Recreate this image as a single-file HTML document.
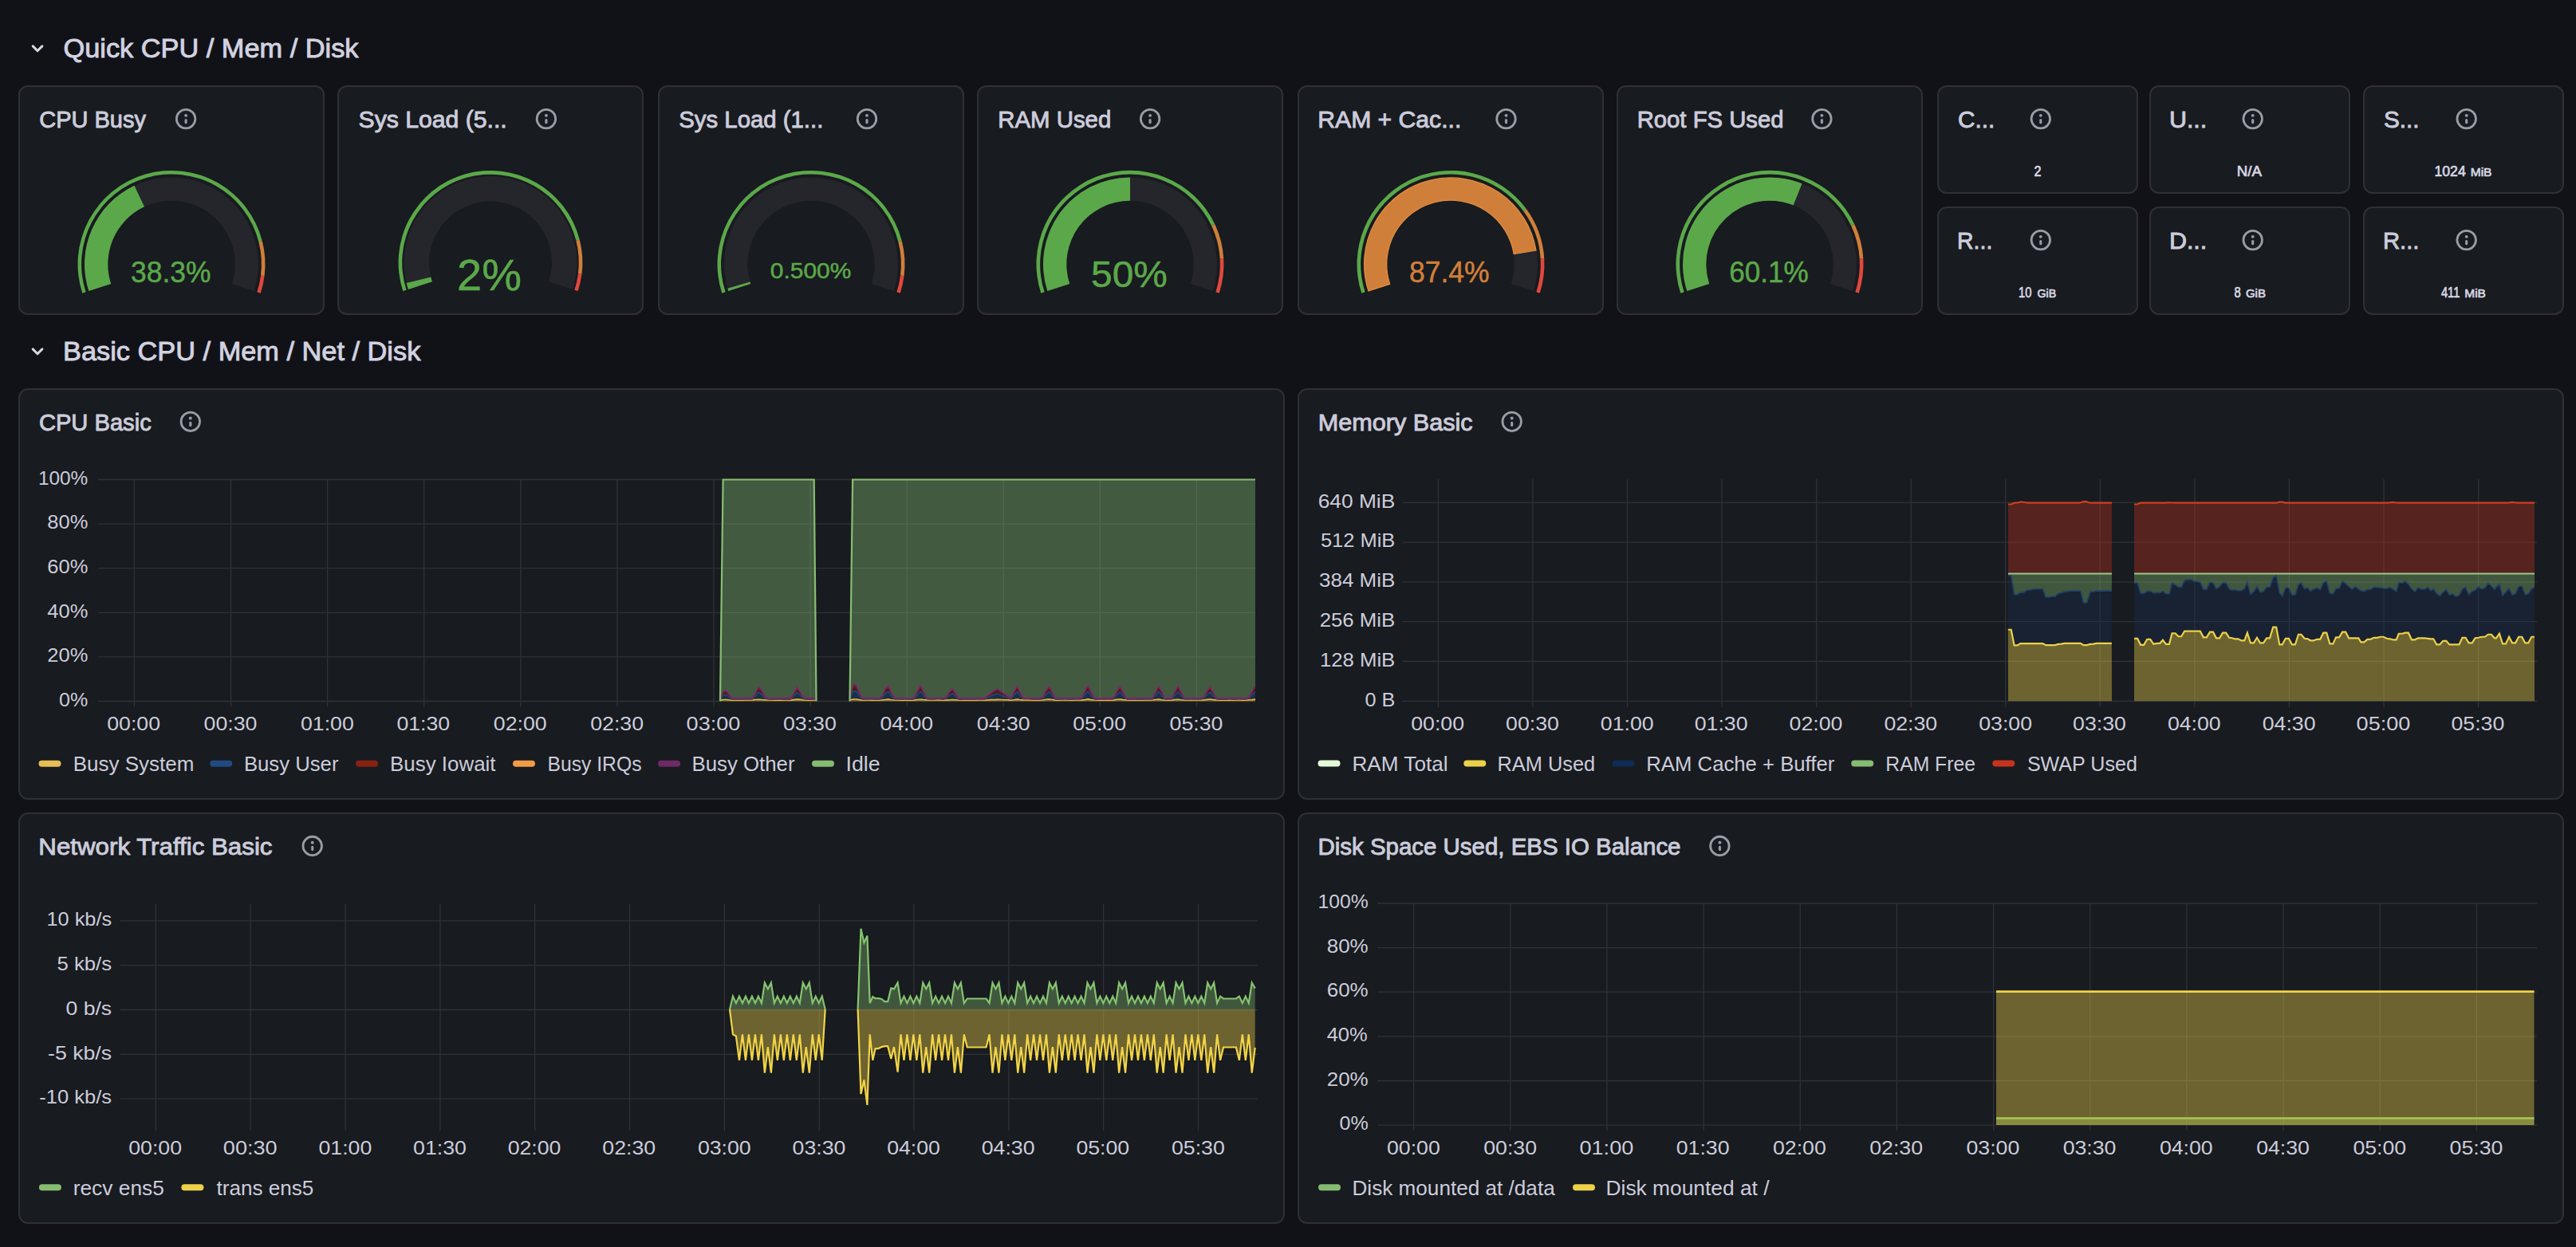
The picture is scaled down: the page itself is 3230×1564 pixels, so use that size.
<!DOCTYPE html>
<html><head><meta charset="utf-8"><style>
html,body{margin:0;padding:0;background:#111217;width:3230px;height:1564px;overflow:hidden}
svg{display:block}
</style></head><body>
<svg width="3230" height="1564" viewBox="0 0 3230 1564" font-family='"Liberation Sans", sans-serif'>
<rect x="0" y="0" width="3230" height="1564" fill="#111217"/>
<polyline points="41.2,57.9 47,63.8 52.9,57.9" fill="none" stroke="#d6d6e4" stroke-width="3" stroke-linecap="round" stroke-linejoin="round"/>
<text x="79.50" y="72.00" font-size="33" fill="#d2d2e0" font-weight="normal" stroke="#d2d2e0" stroke-width="0.9" textLength="370.00" lengthAdjust="spacingAndGlyphs">Quick CPU / Mem / Disk</text>
<rect x="24" y="108" width="382" height="286" rx="11" ry="11" fill="#181b1f" stroke="#2e3036" stroke-width="2"/>
<path d="M103.25,367.71 A117.5,117.5 0 1 1 328.81,302.18 L324.35,303.32 A112.9,112.9 0 1 0 107.63,366.29 Z" fill="#5ba84a"/>
<path d="M328.81,302.18 A117.5,117.5 0 0 1 331.57,346.13 L327.01,345.55 A112.9,112.9 0 0 0 324.35,303.32 Z" fill="#d07f3a"/>
<path d="M331.57,346.13 A117.5,117.5 0 0 1 326.75,367.71 L322.37,366.29 A112.9,112.9 0 0 0 327.01,345.55 Z" fill="#e0483d"/>
<path d="M111.33,365.08 A109.0,109.0 0 1 1 318.67,365.08 L290.80,356.03 A79.7,79.7 0 1 0 139.20,356.03 Z" fill="#25262b"/>
<path d="M111.33,365.08 A109.0,109.0 0 0 1 168.47,232.83 L180.97,259.33 A79.7,79.7 0 0 0 139.20,356.03 Z" fill="#5ba84a"/>
<text x="49.30" y="160.30" font-size="29" fill="#ccccdc" font-weight="normal" stroke="#ccccdc" stroke-width="0.9" textLength="133.60" lengthAdjust="spacingAndGlyphs">CPU Busy</text>
<circle cx="233.1" cy="149.1" r="11.75" fill="none" stroke="#9b9ca6" stroke-width="2.8"/>
<circle cx="233.1" cy="144.85" r="1.95" fill="#9b9ca6"/>
<line x1="233.1" y1="150.50" x2="233.1" y2="153.70" stroke="#9b9ca6" stroke-width="3.1" stroke-linecap="round"/>
<text x="164.10" y="353.50" font-size="36.2" fill="#5ba84a" font-weight="normal" stroke="#5ba84a" stroke-width="0.5" textLength="100.30" lengthAdjust="spacingAndGlyphs">38.3%</text>
<rect x="424" y="108" width="382" height="286" rx="11" ry="11" fill="#181b1f" stroke="#2e3036" stroke-width="2"/>
<path d="M505.25,365.06 A115.4,115.4 0 1 1 726.77,300.70 L722.32,301.85 A110.8,110.8 0 1 0 509.62,363.64 Z" fill="#5ba84a"/>
<path d="M726.77,300.70 A115.4,115.4 0 0 1 729.49,343.86 L724.93,343.29 A110.8,110.8 0 0 0 722.32,301.85 Z" fill="#d07f3a"/>
<path d="M729.49,343.86 A115.4,115.4 0 0 1 724.75,365.06 L720.38,363.64 A110.8,110.8 0 0 0 724.93,343.29 Z" fill="#e0483d"/>
<path d="M511.91,362.90 A108.4,108.4 0 1 1 718.09,362.90 L688.14,353.16 A76.9,76.9 0 1 0 541.86,353.16 Z" fill="#25262b"/>
<path d="M511.91,362.90 A108.4,108.4 0 0 1 509.68,355.04 L540.28,347.59 A76.9,76.9 0 0 0 541.86,353.16 Z" fill="#5ba84a"/>
<text x="449.50" y="160.30" font-size="29" fill="#ccccdc" font-weight="normal" stroke="#ccccdc" stroke-width="0.9" textLength="186.20" lengthAdjust="spacingAndGlyphs">Sys Load (5...</text>
<circle cx="684.9" cy="149.1" r="11.75" fill="none" stroke="#9b9ca6" stroke-width="2.8"/>
<circle cx="684.9" cy="144.85" r="1.95" fill="#9b9ca6"/>
<line x1="684.9" y1="150.50" x2="684.9" y2="153.70" stroke="#9b9ca6" stroke-width="3.1" stroke-linecap="round"/>
<text x="573.10" y="364.00" font-size="55.5" fill="#5ba84a" font-weight="normal" stroke="#5ba84a" stroke-width="0.5" textLength="80.90" lengthAdjust="spacingAndGlyphs">2%</text>
<rect x="826" y="108" width="382" height="286" rx="11" ry="11" fill="#181b1f" stroke="#2e3036" stroke-width="2"/>
<path d="M905.25,367.71 A117.5,117.5 0 1 1 1130.81,302.18 L1126.35,303.32 A112.9,112.9 0 1 0 909.63,366.29 Z" fill="#5ba84a"/>
<path d="M1130.81,302.18 A117.5,117.5 0 0 1 1133.57,346.13 L1129.01,345.55 A112.9,112.9 0 0 0 1126.35,303.32 Z" fill="#d07f3a"/>
<path d="M1133.57,346.13 A117.5,117.5 0 0 1 1128.75,367.71 L1124.37,366.29 A112.9,112.9 0 0 0 1129.01,345.55 Z" fill="#e0483d"/>
<path d="M913.33,365.08 A109.0,109.0 0 1 1 1120.67,365.08 L1092.80,356.03 A79.7,79.7 0 1 0 941.20,356.03 Z" fill="#25262b"/>
<path d="M913.33,365.08 A109.0,109.0 0 0 1 912.31,361.74 L940.45,353.59 A79.7,79.7 0 0 0 941.20,356.03 Z" fill="#5ba84a"/>
<text x="851.30" y="160.30" font-size="29" fill="#ccccdc" font-weight="normal" stroke="#ccccdc" stroke-width="0.9" textLength="181.00" lengthAdjust="spacingAndGlyphs">Sys Load (1...</text>
<circle cx="1087.0" cy="149.1" r="11.75" fill="none" stroke="#9b9ca6" stroke-width="2.8"/>
<circle cx="1087.0" cy="144.85" r="1.95" fill="#9b9ca6"/>
<line x1="1087.0" y1="150.50" x2="1087.0" y2="153.70" stroke="#9b9ca6" stroke-width="3.1" stroke-linecap="round"/>
<text x="965.80" y="348.70" font-size="27.8" fill="#5ba84a" font-weight="normal" stroke="#5ba84a" stroke-width="0.5" textLength="101.50" lengthAdjust="spacingAndGlyphs">0.500%</text>
<rect x="1226" y="108" width="382" height="286" rx="11" ry="11" fill="#181b1f" stroke="#2e3036" stroke-width="2"/>
<path d="M1305.25,367.71 A117.5,117.5 0 0 1 1523.32,281.37 L1519.15,283.33 A112.9,112.9 0 0 0 1309.63,366.29 Z" fill="#5ba84a"/>
<path d="M1523.32,281.37 A117.5,117.5 0 0 1 1534.27,324.02 L1529.68,324.31 A112.9,112.9 0 0 0 1519.15,283.33 Z" fill="#d07f3a"/>
<path d="M1534.27,324.02 A117.5,117.5 0 0 1 1528.75,367.71 L1524.37,366.29 A112.9,112.9 0 0 0 1529.68,324.31 Z" fill="#e0483d"/>
<path d="M1313.33,365.08 A109.0,109.0 0 1 1 1520.67,365.08 L1492.80,356.03 A79.7,79.7 0 1 0 1341.20,356.03 Z" fill="#25262b"/>
<path d="M1313.33,365.08 A109.0,109.0 0 0 1 1417.00,222.40 L1417.00,251.70 A79.7,79.7 0 0 0 1341.20,356.03 Z" fill="#5ba84a"/>
<text x="1251.30" y="160.30" font-size="29" fill="#ccccdc" font-weight="normal" stroke="#ccccdc" stroke-width="0.9" textLength="142.00" lengthAdjust="spacingAndGlyphs">RAM Used</text>
<circle cx="1442.1" cy="149.1" r="11.75" fill="none" stroke="#9b9ca6" stroke-width="2.8"/>
<circle cx="1442.1" cy="144.85" r="1.95" fill="#9b9ca6"/>
<line x1="1442.1" y1="150.50" x2="1442.1" y2="153.70" stroke="#9b9ca6" stroke-width="3.1" stroke-linecap="round"/>
<text x="1368.10" y="359.80" font-size="46.2" fill="#5ba84a" font-weight="normal" stroke="#5ba84a" stroke-width="0.5" textLength="95.80" lengthAdjust="spacingAndGlyphs">50%</text>
<rect x="1628" y="108" width="382" height="286" rx="11" ry="11" fill="#181b1f" stroke="#2e3036" stroke-width="2"/>
<path d="M1707.25,367.71 A117.5,117.5 0 0 1 1914.06,262.34 L1910.34,265.04 A112.9,112.9 0 0 0 1711.63,366.29 Z" fill="#5ba84a"/>
<path d="M1914.06,262.34 A117.5,117.5 0 0 1 1936.27,324.02 L1931.68,324.31 A112.9,112.9 0 0 0 1910.34,265.04 Z" fill="#d07f3a"/>
<path d="M1936.27,324.02 A117.5,117.5 0 0 1 1930.75,367.71 L1926.37,366.29 A112.9,112.9 0 0 0 1931.68,324.31 Z" fill="#e0483d"/>
<path d="M1715.33,365.08 A109.0,109.0 0 1 1 1922.67,365.08 L1894.80,356.03 A79.7,79.7 0 1 0 1743.20,356.03 Z" fill="#25262b"/>
<path d="M1715.91,364.90 A108.4,108.4 0 1 1 1926.00,314.04 L1898.26,318.54 A80.3,80.3 0 1 0 1742.63,356.21 Z" fill="#d07f3a" stroke="#e08b41" stroke-width="1.3"/>
<text x="1652.30" y="160.30" font-size="29" fill="#ccccdc" font-weight="normal" stroke="#ccccdc" stroke-width="0.9" textLength="180.00" lengthAdjust="spacingAndGlyphs">RAM + Cac...</text>
<circle cx="1888.5" cy="149.1" r="11.75" fill="none" stroke="#9b9ca6" stroke-width="2.8"/>
<circle cx="1888.5" cy="144.85" r="1.95" fill="#9b9ca6"/>
<line x1="1888.5" y1="150.50" x2="1888.5" y2="153.70" stroke="#9b9ca6" stroke-width="3.1" stroke-linecap="round"/>
<text x="1767.10" y="353.50" font-size="36.2" fill="#d07f3a" font-weight="normal" stroke="#d07f3a" stroke-width="0.5" textLength="100.50" lengthAdjust="spacingAndGlyphs">87.4%</text>
<rect x="2028" y="108" width="382" height="286" rx="11" ry="11" fill="#181b1f" stroke="#2e3036" stroke-width="2"/>
<path d="M2107.25,367.71 A117.5,117.5 0 0 1 2325.32,281.37 L2321.15,283.33 A112.9,112.9 0 0 0 2111.63,366.29 Z" fill="#5ba84a"/>
<path d="M2325.32,281.37 A117.5,117.5 0 0 1 2336.27,324.02 L2331.68,324.31 A112.9,112.9 0 0 0 2321.15,283.33 Z" fill="#d07f3a"/>
<path d="M2336.27,324.02 A117.5,117.5 0 0 1 2330.75,367.71 L2326.37,366.29 A112.9,112.9 0 0 0 2331.68,324.31 Z" fill="#e0483d"/>
<path d="M2115.33,365.08 A109.0,109.0 0 1 1 2322.67,365.08 L2294.80,356.03 A79.7,79.7 0 1 0 2143.20,356.03 Z" fill="#25262b"/>
<path d="M2115.33,365.08 A109.0,109.0 0 0 1 2259.51,230.21 L2248.62,257.41 A79.7,79.7 0 0 0 2143.20,356.03 Z" fill="#5ba84a"/>
<text x="2052.70" y="160.30" font-size="29" fill="#ccccdc" font-weight="normal" stroke="#ccccdc" stroke-width="0.9" textLength="183.80" lengthAdjust="spacingAndGlyphs">Root FS Used</text>
<circle cx="2284.4" cy="149.1" r="11.75" fill="none" stroke="#9b9ca6" stroke-width="2.8"/>
<circle cx="2284.4" cy="144.85" r="1.95" fill="#9b9ca6"/>
<line x1="2284.4" y1="150.50" x2="2284.4" y2="153.70" stroke="#9b9ca6" stroke-width="3.1" stroke-linecap="round"/>
<text x="2168.30" y="353.90" font-size="36.4" fill="#5ba84a" font-weight="normal" stroke="#5ba84a" stroke-width="0.5" textLength="99.40" lengthAdjust="spacingAndGlyphs">60.1%</text>
<rect x="2430" y="108" width="250" height="134" rx="11" ry="11" fill="#181b1f" stroke="#2e3036" stroke-width="2"/>
<text x="2455.10" y="160.30" font-size="29" fill="#ccccdc" font-weight="normal" stroke="#ccccdc" stroke-width="0.9" textLength="46.20" lengthAdjust="spacingAndGlyphs">C...</text>
<circle cx="2558.8" cy="149.1" r="11.75" fill="none" stroke="#9b9ca6" stroke-width="2.8"/>
<circle cx="2558.8" cy="144.85" r="1.95" fill="#9b9ca6"/>
<line x1="2558.8" y1="150.50" x2="2558.8" y2="153.70" stroke="#9b9ca6" stroke-width="3.1" stroke-linecap="round"/>
<text x="2550.50" y="220.90" font-size="18" fill="#d6d7e3" font-weight="normal" stroke="#d6d7e3" stroke-width="0.7" textLength="9.00" lengthAdjust="spacingAndGlyphs">2</text>
<rect x="2696" y="108" width="250" height="134" rx="11" ry="11" fill="#181b1f" stroke="#2e3036" stroke-width="2"/>
<text x="2719.90" y="160.30" font-size="29" fill="#ccccdc" font-weight="normal" stroke="#ccccdc" stroke-width="0.9" textLength="47.40" lengthAdjust="spacingAndGlyphs">U...</text>
<circle cx="2824.7" cy="149.1" r="11.75" fill="none" stroke="#9b9ca6" stroke-width="2.8"/>
<circle cx="2824.7" cy="144.85" r="1.95" fill="#9b9ca6"/>
<line x1="2824.7" y1="150.50" x2="2824.7" y2="153.70" stroke="#9b9ca6" stroke-width="3.1" stroke-linecap="round"/>
<text x="2804.70" y="220.90" font-size="18" fill="#d6d7e3" font-weight="normal" stroke="#d6d7e3" stroke-width="0.7" textLength="31.20" lengthAdjust="spacingAndGlyphs">N/A</text>
<rect x="2964" y="108" width="250" height="134" rx="11" ry="11" fill="#181b1f" stroke="#2e3036" stroke-width="2"/>
<text x="2988.90" y="160.30" font-size="29" fill="#ccccdc" font-weight="normal" stroke="#ccccdc" stroke-width="0.9" textLength="44.60" lengthAdjust="spacingAndGlyphs">S...</text>
<circle cx="3092.7" cy="149.1" r="11.75" fill="none" stroke="#9b9ca6" stroke-width="2.8"/>
<circle cx="3092.7" cy="144.85" r="1.95" fill="#9b9ca6"/>
<line x1="3092.7" y1="150.50" x2="3092.7" y2="153.70" stroke="#9b9ca6" stroke-width="3.1" stroke-linecap="round"/>
<text x="3052.50" y="220.90" font-size="18" fill="#d6d7e3" font-weight="normal" stroke="#d6d7e3" stroke-width="0.7" textLength="39.20" lengthAdjust="spacingAndGlyphs">1024</text>
<text x="3097.70" y="220.90" font-size="15" fill="#d6d7e3" font-weight="normal" stroke="#d6d7e3" stroke-width="0.7" textLength="26.80" lengthAdjust="spacingAndGlyphs">MiB</text>
<rect x="2430" y="260" width="250" height="134" rx="11" ry="11" fill="#181b1f" stroke="#2e3036" stroke-width="2"/>
<text x="2454.10" y="312.30" font-size="29" fill="#ccccdc" font-weight="normal" stroke="#ccccdc" stroke-width="0.9" textLength="44.20" lengthAdjust="spacingAndGlyphs">R...</text>
<circle cx="2558.8" cy="301.1" r="11.75" fill="none" stroke="#9b9ca6" stroke-width="2.8"/>
<circle cx="2558.8" cy="296.85" r="1.95" fill="#9b9ca6"/>
<line x1="2558.8" y1="302.50" x2="2558.8" y2="305.70" stroke="#9b9ca6" stroke-width="3.1" stroke-linecap="round"/>
<text x="2531.10" y="373.00" font-size="18" fill="#d6d7e3" font-weight="normal" stroke="#d6d7e3" stroke-width="0.7" textLength="16.40" lengthAdjust="spacingAndGlyphs">10</text>
<text x="2554.50" y="373.00" font-size="15" fill="#d6d7e3" font-weight="normal" stroke="#d6d7e3" stroke-width="0.7" textLength="23.80" lengthAdjust="spacingAndGlyphs">GiB</text>
<rect x="2696" y="260" width="250" height="134" rx="11" ry="11" fill="#181b1f" stroke="#2e3036" stroke-width="2"/>
<text x="2719.90" y="312.30" font-size="29" fill="#ccccdc" font-weight="normal" stroke="#ccccdc" stroke-width="0.9" textLength="47.40" lengthAdjust="spacingAndGlyphs">D...</text>
<circle cx="2824.7" cy="301.1" r="11.75" fill="none" stroke="#9b9ca6" stroke-width="2.8"/>
<circle cx="2824.7" cy="296.85" r="1.95" fill="#9b9ca6"/>
<line x1="2824.7" y1="302.50" x2="2824.7" y2="305.70" stroke="#9b9ca6" stroke-width="3.1" stroke-linecap="round"/>
<text x="2801.50" y="373.00" font-size="18" fill="#d6d7e3" font-weight="normal" stroke="#d6d7e3" stroke-width="0.7" textLength="8.20" lengthAdjust="spacingAndGlyphs">8</text>
<text x="2815.90" y="373.00" font-size="15" fill="#d6d7e3" font-weight="normal" stroke="#d6d7e3" stroke-width="0.7" textLength="25.00" lengthAdjust="spacingAndGlyphs">GiB</text>
<rect x="2964" y="260" width="250" height="134" rx="11" ry="11" fill="#181b1f" stroke="#2e3036" stroke-width="2"/>
<text x="2987.90" y="312.30" font-size="29" fill="#ccccdc" font-weight="normal" stroke="#ccccdc" stroke-width="0.9" textLength="45.60" lengthAdjust="spacingAndGlyphs">R...</text>
<circle cx="3092.7" cy="301.1" r="11.75" fill="none" stroke="#9b9ca6" stroke-width="2.8"/>
<circle cx="3092.7" cy="296.85" r="1.95" fill="#9b9ca6"/>
<line x1="3092.7" y1="302.50" x2="3092.7" y2="305.70" stroke="#9b9ca6" stroke-width="3.1" stroke-linecap="round"/>
<text x="3060.90" y="373.00" font-size="18" fill="#d6d7e3" font-weight="normal" stroke="#d6d7e3" stroke-width="0.7" textLength="23.40" lengthAdjust="spacingAndGlyphs">411</text>
<text x="3090.30" y="373.00" font-size="15" fill="#d6d7e3" font-weight="normal" stroke="#d6d7e3" stroke-width="0.7" textLength="26.60" lengthAdjust="spacingAndGlyphs">MiB</text>
<polyline points="41.2,437.9 47,443.8 52.9,437.9" fill="none" stroke="#d6d6e4" stroke-width="3" stroke-linecap="round" stroke-linejoin="round"/>
<text x="79.10" y="452.40" font-size="33" fill="#d2d2e0" font-weight="normal" stroke="#d2d2e0" stroke-width="0.9" textLength="448.20" lengthAdjust="spacingAndGlyphs">Basic CPU / Mem / Net / Disk</text>
<rect x="24" y="488" width="1586" height="514" rx="11" ry="11" fill="#181b1f" stroke="#2e3036" stroke-width="2"/>
<text x="48.90" y="540.00" font-size="29" fill="#ccccdc" font-weight="normal" stroke="#ccccdc" stroke-width="0.9" textLength="140.80" lengthAdjust="spacingAndGlyphs">CPU Basic</text>
<circle cx="238.8" cy="528.8" r="11.75" fill="none" stroke="#9b9ca6" stroke-width="2.8"/>
<circle cx="238.8" cy="524.55" r="1.95" fill="#9b9ca6"/>
<line x1="238.8" y1="530.20" x2="238.8" y2="533.40" stroke="#9b9ca6" stroke-width="3.1" stroke-linecap="round"/>
<line x1="123" y1="601.5" x2="1574" y2="601.5" stroke="#303237" stroke-width="1.3"/>
<line x1="123" y1="657.1" x2="1574" y2="657.1" stroke="#303237" stroke-width="1.3"/>
<line x1="123" y1="712.7" x2="1574" y2="712.7" stroke="#303237" stroke-width="1.3"/>
<line x1="123" y1="768.3" x2="1574" y2="768.3" stroke="#303237" stroke-width="1.3"/>
<line x1="123" y1="823.9" x2="1574" y2="823.9" stroke="#303237" stroke-width="1.3"/>
<line x1="123" y1="879.5" x2="1574" y2="879.5" stroke="#303237" stroke-width="1.3"/>
<line x1="168.4" y1="601.5" x2="168.4" y2="886.7" stroke="#303237" stroke-width="1.3"/>
<line x1="289.5" y1="601.5" x2="289.5" y2="886.7" stroke="#303237" stroke-width="1.3"/>
<line x1="410.6" y1="601.5" x2="410.6" y2="886.7" stroke="#303237" stroke-width="1.3"/>
<line x1="531.7" y1="601.5" x2="531.7" y2="886.7" stroke="#303237" stroke-width="1.3"/>
<line x1="652.8" y1="601.5" x2="652.8" y2="886.7" stroke="#303237" stroke-width="1.3"/>
<line x1="773.9" y1="601.5" x2="773.9" y2="886.7" stroke="#303237" stroke-width="1.3"/>
<line x1="895.0" y1="601.5" x2="895.0" y2="886.7" stroke="#303237" stroke-width="1.3"/>
<line x1="1016.1" y1="601.5" x2="1016.1" y2="886.7" stroke="#303237" stroke-width="1.3"/>
<line x1="1137.2" y1="601.5" x2="1137.2" y2="886.7" stroke="#303237" stroke-width="1.3"/>
<line x1="1258.3" y1="601.5" x2="1258.3" y2="886.7" stroke="#303237" stroke-width="1.3"/>
<line x1="1379.4" y1="601.5" x2="1379.4" y2="886.7" stroke="#303237" stroke-width="1.3"/>
<line x1="1500.5" y1="601.5" x2="1500.5" y2="886.7" stroke="#303237" stroke-width="1.3"/>
<text x="47.90" y="607.70" font-size="24" fill="#ccccdc" font-weight="normal" textLength="62.40" lengthAdjust="spacingAndGlyphs">100%</text>
<text x="59.30" y="663.30" font-size="24" fill="#ccccdc" font-weight="normal" textLength="51.00" lengthAdjust="spacingAndGlyphs">80%</text>
<text x="59.30" y="718.90" font-size="24" fill="#ccccdc" font-weight="normal" textLength="51.00" lengthAdjust="spacingAndGlyphs">60%</text>
<text x="59.30" y="774.50" font-size="24" fill="#ccccdc" font-weight="normal" textLength="51.00" lengthAdjust="spacingAndGlyphs">40%</text>
<text x="59.30" y="830.10" font-size="24" fill="#ccccdc" font-weight="normal" textLength="51.00" lengthAdjust="spacingAndGlyphs">20%</text>
<text x="74.10" y="885.70" font-size="24" fill="#ccccdc" font-weight="normal" textLength="36.20" lengthAdjust="spacingAndGlyphs">0%</text>
<text x="134.20" y="915.60" font-size="24" fill="#ccccdc" font-weight="normal" textLength="66.80" lengthAdjust="spacingAndGlyphs">00:00</text>
<text x="255.60" y="915.60" font-size="24" fill="#ccccdc" font-weight="normal" textLength="66.80" lengthAdjust="spacingAndGlyphs">00:30</text>
<text x="377.00" y="915.60" font-size="24" fill="#ccccdc" font-weight="normal" textLength="66.80" lengthAdjust="spacingAndGlyphs">01:00</text>
<text x="497.40" y="915.60" font-size="24" fill="#ccccdc" font-weight="normal" textLength="66.80" lengthAdjust="spacingAndGlyphs">01:30</text>
<text x="618.80" y="915.60" font-size="24" fill="#ccccdc" font-weight="normal" textLength="66.80" lengthAdjust="spacingAndGlyphs">02:00</text>
<text x="740.20" y="915.60" font-size="24" fill="#ccccdc" font-weight="normal" textLength="66.80" lengthAdjust="spacingAndGlyphs">02:30</text>
<text x="860.60" y="915.60" font-size="24" fill="#ccccdc" font-weight="normal" textLength="67.80" lengthAdjust="spacingAndGlyphs">03:00</text>
<text x="982.00" y="915.60" font-size="24" fill="#ccccdc" font-weight="normal" textLength="66.80" lengthAdjust="spacingAndGlyphs">03:30</text>
<text x="1103.40" y="915.60" font-size="24" fill="#ccccdc" font-weight="normal" textLength="66.80" lengthAdjust="spacingAndGlyphs">04:00</text>
<text x="1224.80" y="915.60" font-size="24" fill="#ccccdc" font-weight="normal" textLength="66.80" lengthAdjust="spacingAndGlyphs">04:30</text>
<text x="1345.20" y="915.60" font-size="24" fill="#ccccdc" font-weight="normal" textLength="66.80" lengthAdjust="spacingAndGlyphs">05:00</text>
<text x="1466.60" y="915.60" font-size="24" fill="#ccccdc" font-weight="normal" textLength="66.80" lengthAdjust="spacingAndGlyphs">05:30</text>
<polygon points="903.00,875.71 906.60,601.50 911.03,601.50 915.05,601.50 919.07,601.50 923.08,601.50 927.10,601.50 931.12,601.50 935.13,601.50 939.15,601.50 943.17,601.50 947.18,601.50 951.20,601.50 955.22,601.50 959.23,601.50 963.25,601.50 967.27,601.50 971.28,601.50 975.30,601.50 979.32,601.50 983.33,601.50 987.35,601.50 991.37,601.50 995.38,601.50 999.40,601.50 1003.42,601.50 1007.43,601.50 1011.45,601.50 1015.47,601.50 1020.70,601.50 1023.50,875.43 1023.50,875.43 1019.48,875.41 1015.47,875.68 1011.45,875.69 1007.43,874.53 1003.42,867.30 999.40,861.96 995.38,869.06 991.37,875.62 987.35,875.36 983.33,875.61 979.32,875.59 975.30,875.48 971.28,875.80 967.27,875.64 963.25,875.52 959.23,873.74 955.22,865.46 951.20,861.22 947.18,869.03 943.17,875.47 939.15,875.54 935.13,875.36 931.12,875.77 927.10,875.48 923.08,875.83 919.07,875.75 915.05,872.11 911.03,866.54 907.02,866.57 903.00,875.71" fill="#7EB26D" fill-opacity="0.42"/>
<polygon points="903.00,878.11 907.02,877.44 911.03,877.49 915.05,878.01 919.07,878.23 923.08,878.22 927.10,878.07 931.12,878.20 935.13,877.99 939.15,878.01 943.17,877.84 947.18,877.51 951.20,877.32 955.22,877.52 959.23,878.06 963.25,877.98 967.27,878.02 971.28,878.22 975.30,877.97 979.32,878.12 983.33,878.06 987.35,877.92 991.37,878.15 995.38,877.65 999.40,877.14 1003.42,877.36 1007.43,878.02 1011.45,878.19 1015.47,878.23 1019.48,877.93 1023.50,877.88 1023.50,879.50 1019.48,879.50 1015.47,879.50 1011.45,879.50 1007.43,879.50 1003.42,879.50 999.40,879.50 995.38,879.50 991.37,879.50 987.35,879.50 983.33,879.50 979.32,879.50 975.30,879.50 971.28,879.50 967.27,879.50 963.25,879.50 959.23,879.50 955.22,879.50 951.20,879.50 947.18,879.50 943.17,879.50 939.15,879.50 935.13,879.50 931.12,879.50 927.10,879.50 923.08,879.50 919.07,879.50 915.05,879.50 911.03,879.50 907.02,879.50 903.00,879.50" fill="#EAB839" fill-opacity="0.4"/>
<polygon points="903.00,877.24 907.02,871.54 911.03,871.51 915.05,875.02 919.07,877.28 923.08,877.36 927.10,877.01 931.12,877.30 935.13,876.89 939.15,877.06 943.17,876.99 947.18,873.01 951.20,868.31 955.22,870.83 959.23,876.00 963.25,877.05 967.27,877.17 971.28,877.33 975.30,877.01 979.32,877.12 983.33,877.14 987.35,876.89 991.37,877.15 995.38,873.02 999.40,868.65 1003.42,871.93 1007.43,876.43 1011.45,877.22 1015.47,877.21 1019.48,876.94 1023.50,876.96 1023.50,877.88 1019.48,877.93 1015.47,878.23 1011.45,878.19 1007.43,878.02 1003.42,877.36 999.40,877.14 995.38,877.65 991.37,878.15 987.35,877.92 983.33,878.06 979.32,878.12 975.30,877.97 971.28,878.22 967.27,878.02 963.25,877.98 959.23,878.06 955.22,877.52 951.20,877.32 947.18,877.51 943.17,877.84 939.15,878.01 935.13,877.99 931.12,878.20 927.10,878.07 923.08,878.22 919.07,878.23 915.05,878.01 911.03,877.49 907.02,877.44 903.00,878.11" fill="#1F4E8C" fill-opacity="0.4"/>
<polygon points="903.00,877.10 907.02,868.50 911.03,868.46 915.05,873.72 919.07,877.14 923.08,877.22 927.10,876.87 931.12,877.16 935.13,876.75 939.15,876.93 943.17,876.86 947.18,870.80 951.20,863.47 955.22,867.45 959.23,875.24 963.25,876.91 967.27,877.03 971.28,877.19 975.30,876.87 979.32,876.98 983.33,877.00 987.35,876.75 991.37,877.01 995.38,870.83 999.40,864.16 1003.42,869.17 1007.43,875.98 1011.45,877.08 1015.47,877.07 1019.48,876.80 1023.50,876.82 1023.50,876.96 1019.48,876.94 1015.47,877.21 1011.45,877.22 1007.43,876.43 1003.42,871.93 999.40,868.65 995.38,873.02 991.37,877.15 987.35,876.89 983.33,877.14 979.32,877.12 975.30,877.01 971.28,877.33 967.27,877.17 963.25,877.05 959.23,876.00 955.22,870.83 951.20,868.31 947.18,873.01 943.17,876.99 939.15,877.06 935.13,876.89 931.12,877.30 927.10,877.01 923.08,877.36 919.07,877.28 915.05,875.02 911.03,871.51 907.02,871.54 903.00,877.24" fill="#8a1c10" fill-opacity="0.4"/>
<polygon points="903.00,876.96 907.02,868.36 911.03,868.33 915.05,873.58 919.07,877.00 923.08,877.08 927.10,876.73 931.12,877.02 935.13,876.61 939.15,876.79 943.17,876.72 947.18,870.67 951.20,863.33 955.22,867.31 959.23,875.10 963.25,876.77 967.27,876.89 971.28,877.05 975.30,876.73 979.32,876.84 983.33,876.86 987.35,876.61 991.37,876.88 995.38,870.69 999.40,864.02 1003.42,869.03 1007.43,875.84 1011.45,876.94 1015.47,876.93 1019.48,876.66 1023.50,876.68 1023.50,876.82 1019.48,876.80 1015.47,877.07 1011.45,877.08 1007.43,875.98 1003.42,869.17 999.40,864.16 995.38,870.83 991.37,877.01 987.35,876.75 983.33,877.00 979.32,876.98 975.30,876.87 971.28,877.19 967.27,877.03 963.25,876.91 959.23,875.24 955.22,867.45 951.20,863.47 947.18,870.80 943.17,876.86 939.15,876.93 935.13,876.75 931.12,877.16 927.10,876.87 923.08,877.22 919.07,877.14 915.05,873.72 911.03,868.46 907.02,868.50 903.00,877.10" fill="#EF9A45" fill-opacity="0.4"/>
<polygon points="903.00,875.71 907.02,866.57 911.03,866.54 915.05,872.11 919.07,875.75 923.08,875.83 927.10,875.48 931.12,875.77 935.13,875.36 939.15,875.54 943.17,875.47 947.18,869.03 951.20,861.22 955.22,865.46 959.23,873.74 963.25,875.52 967.27,875.64 971.28,875.80 975.30,875.48 979.32,875.59 983.33,875.61 987.35,875.36 991.37,875.62 995.38,869.06 999.40,861.96 1003.42,867.30 1007.43,874.53 1011.45,875.69 1015.47,875.68 1019.48,875.41 1023.50,875.43 1023.50,876.68 1019.48,876.66 1015.47,876.93 1011.45,876.94 1007.43,875.84 1003.42,869.03 999.40,864.02 995.38,870.69 991.37,876.88 987.35,876.61 983.33,876.86 979.32,876.84 975.30,876.73 971.28,877.05 967.27,876.89 963.25,876.77 959.23,875.10 955.22,867.31 951.20,863.33 947.18,870.67 943.17,876.72 939.15,876.79 935.13,876.61 931.12,877.02 927.10,876.73 923.08,877.08 919.07,877.00 915.05,873.58 911.03,868.33 907.02,868.36 903.00,876.96" fill="#7a2a70" fill-opacity="0.4"/>
<polyline points="903.00,878.11 907.02,877.44 911.03,877.49 915.05,878.01 919.07,878.23 923.08,878.22 927.10,878.07 931.12,878.20 935.13,877.99 939.15,878.01 943.17,877.84 947.18,877.51 951.20,877.32 955.22,877.52 959.23,878.06 963.25,877.98 967.27,878.02 971.28,878.22 975.30,877.97 979.32,878.12 983.33,878.06 987.35,877.92 991.37,878.15 995.38,877.65 999.40,877.14 1003.42,877.36 1007.43,878.02 1011.45,878.19 1015.47,878.23 1019.48,877.93 1023.50,877.88" fill="none" stroke="#EAB839" stroke-width="1.6" stroke-opacity="1.0" stroke-linejoin="miter" stroke-miterlimit="4"/>
<polyline points="903.00,877.24 907.02,871.54 911.03,871.51 915.05,875.02 919.07,877.28 923.08,877.36 927.10,877.01 931.12,877.30 935.13,876.89 939.15,877.06 943.17,876.99 947.18,873.01 951.20,868.31 955.22,870.83 959.23,876.00 963.25,877.05 967.27,877.17 971.28,877.33 975.30,877.01 979.32,877.12 983.33,877.14 987.35,876.89 991.37,877.15 995.38,873.02 999.40,868.65 1003.42,871.93 1007.43,876.43 1011.45,877.22 1015.47,877.21 1019.48,876.94 1023.50,876.96" fill="none" stroke="#1F4E8C" stroke-width="1.5" stroke-opacity="0.9" stroke-linejoin="miter" stroke-miterlimit="4"/>
<polyline points="903.00,877.10 907.02,868.50 911.03,868.46 915.05,873.72 919.07,877.14 923.08,877.22 927.10,876.87 931.12,877.16 935.13,876.75 939.15,876.93 943.17,876.86 947.18,870.80 951.20,863.47 955.22,867.45 959.23,875.24 963.25,876.91 967.27,877.03 971.28,877.19 975.30,876.87 979.32,876.98 983.33,877.00 987.35,876.75 991.37,877.01 995.38,870.83 999.40,864.16 1003.42,869.17 1007.43,875.98 1011.45,877.08 1015.47,877.07 1019.48,876.80 1023.50,876.82" fill="none" stroke="#8a1c10" stroke-width="1.3" stroke-opacity="0.6" stroke-linejoin="miter" stroke-miterlimit="4"/>
<polyline points="903.00,875.71 907.02,866.57 911.03,866.54 915.05,872.11 919.07,875.75 923.08,875.83 927.10,875.48 931.12,875.77 935.13,875.36 939.15,875.54 943.17,875.47 947.18,869.03 951.20,861.22 955.22,865.46 959.23,873.74 963.25,875.52 967.27,875.64 971.28,875.80 975.30,875.48 979.32,875.59 983.33,875.61 987.35,875.36 991.37,875.62 995.38,869.06 999.40,861.96 1003.42,867.30 1007.43,874.53 1011.45,875.69 1015.47,875.68 1019.48,875.41 1023.50,875.43" fill="none" stroke="#7a2a70" stroke-width="1.5" stroke-opacity="1.0" stroke-linejoin="miter" stroke-miterlimit="4"/>
<polyline points="903.00,879.50 906.60,601.50 911.03,601.50 915.05,601.50 919.07,601.50 923.08,601.50 927.10,601.50 931.12,601.50 935.13,601.50 939.15,601.50 943.17,601.50 947.18,601.50 951.20,601.50 955.22,601.50 959.23,601.50 963.25,601.50 967.27,601.50 971.28,601.50 975.30,601.50 979.32,601.50 983.33,601.50 987.35,601.50 991.37,601.50 995.38,601.50 999.40,601.50 1003.42,601.50 1007.43,601.50 1011.45,601.50 1015.47,601.50 1020.70,601.50 1023.50,879.50" fill="none" stroke="#88bd72" stroke-width="2.2" stroke-opacity="1.0" stroke-linejoin="miter" stroke-miterlimit="4"/>
<polygon points="1065.50,875.43 1069.10,601.50 1073.57,601.50 1077.61,601.50 1081.64,601.50 1085.68,601.50 1089.71,601.50 1093.75,601.50 1097.79,601.50 1101.82,601.50 1105.86,601.50 1109.89,601.50 1113.93,601.50 1117.96,601.50 1122.00,601.50 1126.04,601.50 1130.07,601.50 1134.11,601.50 1138.14,601.50 1142.18,601.50 1146.21,601.50 1150.25,601.50 1154.29,601.50 1158.32,601.50 1162.36,601.50 1166.39,601.50 1170.43,601.50 1174.46,601.50 1178.50,601.50 1182.54,601.50 1186.57,601.50 1190.61,601.50 1194.64,601.50 1198.68,601.50 1202.71,601.50 1206.75,601.50 1210.79,601.50 1214.82,601.50 1218.86,601.50 1222.89,601.50 1226.93,601.50 1230.96,601.50 1235.00,601.50 1239.04,601.50 1243.07,601.50 1247.11,601.50 1251.14,601.50 1255.18,601.50 1259.21,601.50 1263.25,601.50 1267.29,601.50 1271.32,601.50 1275.36,601.50 1279.39,601.50 1283.43,601.50 1287.46,601.50 1291.50,601.50 1295.54,601.50 1299.57,601.50 1303.61,601.50 1307.64,601.50 1311.68,601.50 1315.71,601.50 1319.75,601.50 1323.79,601.50 1327.82,601.50 1331.86,601.50 1335.89,601.50 1339.93,601.50 1343.96,601.50 1348.00,601.50 1352.04,601.50 1356.07,601.50 1360.11,601.50 1364.14,601.50 1368.18,601.50 1372.21,601.50 1376.25,601.50 1380.29,601.50 1384.32,601.50 1388.36,601.50 1392.39,601.50 1396.43,601.50 1400.46,601.50 1404.50,601.50 1408.54,601.50 1412.57,601.50 1416.61,601.50 1420.64,601.50 1424.68,601.50 1428.71,601.50 1432.75,601.50 1436.79,601.50 1440.82,601.50 1444.86,601.50 1448.89,601.50 1452.93,601.50 1456.96,601.50 1461.00,601.50 1465.04,601.50 1469.07,601.50 1473.11,601.50 1477.14,601.50 1481.18,601.50 1485.21,601.50 1489.25,601.50 1493.29,601.50 1497.32,601.50 1501.36,601.50 1505.39,601.50 1509.43,601.50 1513.46,601.50 1517.50,601.50 1521.54,601.50 1525.57,601.50 1529.61,601.50 1533.64,601.50 1537.68,601.50 1541.71,601.50 1545.75,601.50 1549.79,601.50 1553.82,601.50 1557.86,601.50 1561.89,601.50 1565.93,601.50 1569.96,601.50 1574.00,601.50 1574.00,859.99 1569.96,866.68 1565.93,874.42 1561.89,875.58 1557.86,875.53 1553.82,875.25 1549.79,875.57 1545.75,875.62 1541.71,875.31 1537.68,875.67 1533.64,875.79 1529.61,875.71 1525.57,875.50 1521.54,868.95 1517.50,861.19 1513.46,866.21 1509.43,874.07 1505.39,875.55 1501.36,875.48 1497.32,875.49 1493.29,875.38 1489.25,875.44 1485.21,875.42 1481.18,868.19 1477.14,860.38 1473.11,867.37 1469.07,875.33 1465.04,875.43 1461.00,875.68 1456.96,867.92 1452.93,860.12 1448.89,867.81 1444.86,875.47 1440.82,875.46 1436.79,875.39 1432.75,875.61 1428.71,875.58 1424.68,875.66 1420.64,875.62 1416.61,875.70 1412.57,875.48 1408.54,868.63 1404.50,860.79 1400.46,866.54 1396.43,874.86 1392.39,875.59 1388.36,875.29 1384.32,875.60 1380.29,875.28 1376.25,875.79 1372.21,875.54 1368.18,867.75 1364.14,859.46 1360.11,866.83 1356.07,875.09 1352.04,875.44 1348.00,875.29 1343.96,875.67 1339.93,875.39 1335.89,875.40 1331.86,875.38 1327.82,875.75 1323.79,875.73 1319.75,868.84 1315.71,860.47 1311.68,865.51 1307.64,873.93 1303.61,875.80 1299.57,875.73 1295.54,875.65 1291.50,875.34 1287.46,875.31 1283.43,875.27 1279.39,868.39 1275.36,860.36 1271.32,867.31 1267.29,875.17 1263.25,872.97 1259.21,869.96 1255.18,867.14 1251.14,864.04 1247.11,865.67 1243.07,868.62 1239.04,871.87 1235.00,875.10 1230.96,875.56 1226.93,875.26 1222.89,875.70 1218.86,875.68 1214.82,875.59 1210.79,875.63 1206.75,875.74 1202.71,875.84 1198.68,870.62 1194.64,863.76 1190.61,867.17 1186.57,873.88 1182.54,875.61 1178.50,875.30 1174.46,875.29 1170.43,875.59 1166.39,875.50 1162.36,875.30 1158.32,867.65 1154.29,859.31 1150.25,866.43 1146.21,875.04 1142.18,875.75 1138.14,875.44 1134.11,875.49 1130.07,875.65 1126.04,875.30 1122.00,875.41 1117.96,869.11 1113.93,859.68 1109.89,864.01 1105.86,873.07 1101.82,875.78 1097.79,875.75 1093.75,875.54 1089.71,875.46 1085.68,875.34 1081.64,875.67 1077.61,868.94 1073.57,858.87 1069.54,859.12 1065.50,875.43" fill="#7EB26D" fill-opacity="0.42"/>
<polygon points="1065.50,877.96 1069.54,877.03 1073.57,876.93 1077.61,877.66 1081.64,878.22 1085.68,877.98 1089.71,877.91 1093.75,878.09 1097.79,878.24 1101.82,878.18 1105.86,878.07 1109.89,877.50 1113.93,877.15 1117.96,877.82 1122.00,878.02 1126.04,877.91 1130.07,878.13 1134.11,878.10 1138.14,877.85 1142.18,878.18 1146.21,878.12 1150.25,877.46 1154.29,877.27 1158.32,877.62 1162.36,877.85 1166.39,878.03 1170.43,877.97 1174.46,877.87 1178.50,877.88 1182.54,878.09 1186.57,878.10 1190.61,877.71 1194.64,877.45 1198.68,877.80 1202.71,878.25 1206.75,878.21 1210.79,878.24 1214.82,877.99 1218.86,878.14 1222.89,878.10 1226.93,877.89 1230.96,878.05 1235.00,878.17 1239.04,877.88 1243.07,877.50 1247.11,877.65 1251.14,877.34 1255.18,877.52 1259.21,877.71 1263.25,877.75 1267.29,878.11 1271.32,877.69 1275.36,877.13 1279.39,877.68 1283.43,877.91 1287.46,877.89 1291.50,877.91 1295.54,878.15 1299.57,878.10 1303.61,878.24 1307.64,878.04 1311.68,877.27 1315.71,876.98 1319.75,877.46 1323.79,878.16 1327.82,878.17 1331.86,877.99 1335.89,877.90 1339.93,877.98 1343.96,878.21 1348.00,877.87 1352.04,877.94 1356.07,878.14 1360.11,877.59 1364.14,876.90 1368.18,877.62 1372.21,877.95 1376.25,878.20 1380.29,877.87 1384.32,878.19 1388.36,877.84 1392.39,878.10 1396.43,878.14 1400.46,877.32 1404.50,877.16 1408.54,877.66 1412.57,877.90 1416.61,878.14 1420.64,878.15 1424.68,878.14 1428.71,878.19 1432.75,878.10 1436.79,878.01 1440.82,878.07 1444.86,878.04 1448.89,877.57 1452.93,877.14 1456.96,877.79 1461.00,878.18 1465.04,877.95 1469.07,878.10 1473.11,877.54 1477.14,877.30 1481.18,877.70 1485.21,877.93 1489.25,878.01 1493.29,877.87 1497.32,877.99 1501.36,878.04 1505.39,878.06 1509.43,877.97 1513.46,877.41 1517.50,877.01 1521.54,877.63 1525.57,877.90 1529.61,878.20 1533.64,878.22 1537.68,878.22 1541.71,877.92 1545.75,878.18 1549.79,877.97 1553.82,877.88 1557.86,878.16 1561.89,878.08 1565.93,877.79 1569.96,877.65 1574.00,877.11 1574.00,879.50 1569.96,879.50 1565.93,879.50 1561.89,879.50 1557.86,879.50 1553.82,879.50 1549.79,879.50 1545.75,879.50 1541.71,879.50 1537.68,879.50 1533.64,879.50 1529.61,879.50 1525.57,879.50 1521.54,879.50 1517.50,879.50 1513.46,879.50 1509.43,879.50 1505.39,879.50 1501.36,879.50 1497.32,879.50 1493.29,879.50 1489.25,879.50 1485.21,879.50 1481.18,879.50 1477.14,879.50 1473.11,879.50 1469.07,879.50 1465.04,879.50 1461.00,879.50 1456.96,879.50 1452.93,879.50 1448.89,879.50 1444.86,879.50 1440.82,879.50 1436.79,879.50 1432.75,879.50 1428.71,879.50 1424.68,879.50 1420.64,879.50 1416.61,879.50 1412.57,879.50 1408.54,879.50 1404.50,879.50 1400.46,879.50 1396.43,879.50 1392.39,879.50 1388.36,879.50 1384.32,879.50 1380.29,879.50 1376.25,879.50 1372.21,879.50 1368.18,879.50 1364.14,879.50 1360.11,879.50 1356.07,879.50 1352.04,879.50 1348.00,879.50 1343.96,879.50 1339.93,879.50 1335.89,879.50 1331.86,879.50 1327.82,879.50 1323.79,879.50 1319.75,879.50 1315.71,879.50 1311.68,879.50 1307.64,879.50 1303.61,879.50 1299.57,879.50 1295.54,879.50 1291.50,879.50 1287.46,879.50 1283.43,879.50 1279.39,879.50 1275.36,879.50 1271.32,879.50 1267.29,879.50 1263.25,879.50 1259.21,879.50 1255.18,879.50 1251.14,879.50 1247.11,879.50 1243.07,879.50 1239.04,879.50 1235.00,879.50 1230.96,879.50 1226.93,879.50 1222.89,879.50 1218.86,879.50 1214.82,879.50 1210.79,879.50 1206.75,879.50 1202.71,879.50 1198.68,879.50 1194.64,879.50 1190.61,879.50 1186.57,879.50 1182.54,879.50 1178.50,879.50 1174.46,879.50 1170.43,879.50 1166.39,879.50 1162.36,879.50 1158.32,879.50 1154.29,879.50 1150.25,879.50 1146.21,879.50 1142.18,879.50 1138.14,879.50 1134.11,879.50 1130.07,879.50 1126.04,879.50 1122.00,879.50 1117.96,879.50 1113.93,879.50 1109.89,879.50 1105.86,879.50 1101.82,879.50 1097.79,879.50 1093.75,879.50 1089.71,879.50 1085.68,879.50 1081.64,879.50 1077.61,879.50 1073.57,879.50 1069.54,879.50 1065.50,879.50" fill="#EAB839" fill-opacity="0.4"/>
<polygon points="1065.50,876.96 1069.54,866.90 1073.57,866.66 1077.61,872.97 1081.64,877.19 1085.68,876.87 1089.71,876.99 1093.75,877.07 1097.79,877.28 1101.82,877.31 1105.86,875.58 1109.89,870.02 1113.93,867.23 1117.96,873.16 1122.00,876.94 1126.04,876.83 1130.07,877.18 1134.11,877.02 1138.14,876.97 1142.18,877.28 1146.21,876.81 1150.25,871.44 1154.29,867.12 1158.32,872.20 1162.36,876.83 1166.39,877.03 1170.43,877.12 1174.46,876.82 1178.50,876.83 1182.54,877.14 1186.57,876.09 1190.61,872.01 1194.64,869.86 1198.68,874.10 1202.71,877.37 1206.75,877.27 1210.79,877.16 1214.82,877.12 1218.86,877.21 1222.89,877.23 1226.93,876.78 1230.96,877.09 1235.00,876.90 1239.04,874.85 1243.07,872.77 1247.11,870.99 1251.14,869.99 1255.18,871.92 1259.21,873.56 1263.25,875.40 1267.29,876.89 1271.32,872.00 1275.36,867.64 1279.39,872.70 1283.43,876.80 1287.46,876.84 1291.50,876.87 1295.54,877.18 1299.57,877.26 1303.61,877.33 1307.64,876.09 1311.68,870.79 1315.71,867.63 1319.75,872.86 1323.79,877.26 1327.82,877.28 1331.86,876.90 1335.89,876.93 1339.93,876.92 1343.96,877.20 1348.00,876.82 1352.04,876.97 1356.07,876.81 1360.11,871.67 1364.14,867.06 1368.18,872.21 1372.21,877.07 1376.25,877.32 1380.29,876.81 1384.32,877.12 1388.36,876.82 1392.39,877.12 1396.43,876.76 1400.46,871.41 1404.50,867.89 1408.54,872.77 1412.57,877.01 1416.61,877.23 1420.64,877.15 1424.68,877.19 1428.71,877.11 1432.75,877.14 1436.79,876.92 1440.82,876.98 1444.86,877.02 1448.89,872.34 1452.93,867.58 1456.96,872.40 1461.00,877.21 1465.04,876.96 1469.07,876.96 1473.11,871.97 1477.14,867.75 1481.18,872.58 1485.21,876.95 1489.25,876.97 1493.29,876.91 1497.32,877.02 1501.36,877.01 1505.39,877.08 1509.43,876.12 1513.46,871.22 1517.50,868.15 1521.54,872.93 1525.57,877.03 1529.61,877.24 1533.64,877.32 1537.68,877.20 1541.71,876.84 1545.75,877.15 1549.79,877.10 1553.82,876.78 1557.86,877.06 1561.89,877.11 1565.93,876.26 1569.96,871.65 1574.00,867.46 1574.00,877.11 1569.96,877.65 1565.93,877.79 1561.89,878.08 1557.86,878.16 1553.82,877.88 1549.79,877.97 1545.75,878.18 1541.71,877.92 1537.68,878.22 1533.64,878.22 1529.61,878.20 1525.57,877.90 1521.54,877.63 1517.50,877.01 1513.46,877.41 1509.43,877.97 1505.39,878.06 1501.36,878.04 1497.32,877.99 1493.29,877.87 1489.25,878.01 1485.21,877.93 1481.18,877.70 1477.14,877.30 1473.11,877.54 1469.07,878.10 1465.04,877.95 1461.00,878.18 1456.96,877.79 1452.93,877.14 1448.89,877.57 1444.86,878.04 1440.82,878.07 1436.79,878.01 1432.75,878.10 1428.71,878.19 1424.68,878.14 1420.64,878.15 1416.61,878.14 1412.57,877.90 1408.54,877.66 1404.50,877.16 1400.46,877.32 1396.43,878.14 1392.39,878.10 1388.36,877.84 1384.32,878.19 1380.29,877.87 1376.25,878.20 1372.21,877.95 1368.18,877.62 1364.14,876.90 1360.11,877.59 1356.07,878.14 1352.04,877.94 1348.00,877.87 1343.96,878.21 1339.93,877.98 1335.89,877.90 1331.86,877.99 1327.82,878.17 1323.79,878.16 1319.75,877.46 1315.71,876.98 1311.68,877.27 1307.64,878.04 1303.61,878.24 1299.57,878.10 1295.54,878.15 1291.50,877.91 1287.46,877.89 1283.43,877.91 1279.39,877.68 1275.36,877.13 1271.32,877.69 1267.29,878.11 1263.25,877.75 1259.21,877.71 1255.18,877.52 1251.14,877.34 1247.11,877.65 1243.07,877.50 1239.04,877.88 1235.00,878.17 1230.96,878.05 1226.93,877.89 1222.89,878.10 1218.86,878.14 1214.82,877.99 1210.79,878.24 1206.75,878.21 1202.71,878.25 1198.68,877.80 1194.64,877.45 1190.61,877.71 1186.57,878.10 1182.54,878.09 1178.50,877.88 1174.46,877.87 1170.43,877.97 1166.39,878.03 1162.36,877.85 1158.32,877.62 1154.29,877.27 1150.25,877.46 1146.21,878.12 1142.18,878.18 1138.14,877.85 1134.11,878.10 1130.07,878.13 1126.04,877.91 1122.00,878.02 1117.96,877.82 1113.93,877.15 1109.89,877.50 1105.86,878.07 1101.82,878.18 1097.79,878.24 1093.75,878.09 1089.71,877.91 1085.68,877.98 1081.64,878.22 1077.61,877.66 1073.57,876.93 1069.54,877.03 1065.50,877.96" fill="#1F4E8C" fill-opacity="0.4"/>
<polygon points="1065.50,876.82 1069.54,861.48 1073.57,861.23 1077.61,870.72 1081.64,877.06 1085.68,876.73 1089.71,876.85 1093.75,876.93 1097.79,877.14 1101.82,877.17 1105.86,874.62 1109.89,866.09 1113.93,862.01 1117.96,870.89 1122.00,876.80 1126.04,876.69 1130.07,877.04 1134.11,876.88 1138.14,876.83 1142.18,877.14 1146.21,876.47 1150.25,868.36 1154.29,861.68 1158.32,869.51 1162.36,876.69 1166.39,876.89 1170.43,876.98 1174.46,876.68 1178.50,876.69 1182.54,877.00 1186.57,875.38 1190.61,869.08 1194.64,865.86 1198.68,872.31 1202.71,877.23 1206.75,877.13 1210.79,877.02 1214.82,876.98 1218.86,877.07 1222.89,877.09 1226.93,876.65 1230.96,876.95 1235.00,876.53 1239.04,873.49 1243.07,870.42 1247.11,867.65 1251.14,866.12 1255.18,869.04 1259.21,871.67 1263.25,874.50 1267.29,876.59 1271.32,869.19 1275.36,862.65 1279.39,870.21 1283.43,876.66 1287.46,876.70 1291.50,876.73 1295.54,877.04 1299.57,877.12 1303.61,877.19 1307.64,875.41 1311.68,867.48 1315.71,862.74 1319.75,870.62 1323.79,877.12 1327.82,877.14 1331.86,876.77 1335.89,876.79 1339.93,876.78 1343.96,877.06 1348.00,876.68 1352.04,876.83 1356.07,876.51 1360.11,868.73 1364.14,861.80 1368.18,869.59 1372.21,876.93 1376.25,877.18 1380.29,876.67 1384.32,876.99 1388.36,876.68 1392.39,876.98 1396.43,876.31 1400.46,868.45 1404.50,863.05 1408.54,870.43 1412.57,876.87 1416.61,877.09 1420.64,877.01 1424.68,877.05 1428.71,876.97 1432.75,877.00 1436.79,876.78 1440.82,876.85 1444.86,876.86 1448.89,869.67 1452.93,862.44 1456.96,869.77 1461.00,877.07 1465.04,876.82 1469.07,876.73 1473.11,869.24 1477.14,862.68 1481.18,870.02 1485.21,876.81 1489.25,876.83 1493.29,876.77 1497.32,876.88 1501.36,876.87 1505.39,876.94 1509.43,875.54 1513.46,868.14 1517.50,863.42 1521.54,870.72 1525.57,876.89 1529.61,877.10 1533.64,877.18 1537.68,877.06 1541.71,876.70 1545.75,877.01 1549.79,876.96 1553.82,876.64 1557.86,876.92 1561.89,876.97 1565.93,875.86 1569.96,868.61 1574.00,862.30 1574.00,867.46 1569.96,871.65 1565.93,876.26 1561.89,877.11 1557.86,877.06 1553.82,876.78 1549.79,877.10 1545.75,877.15 1541.71,876.84 1537.68,877.20 1533.64,877.32 1529.61,877.24 1525.57,877.03 1521.54,872.93 1517.50,868.15 1513.46,871.22 1509.43,876.12 1505.39,877.08 1501.36,877.01 1497.32,877.02 1493.29,876.91 1489.25,876.97 1485.21,876.95 1481.18,872.58 1477.14,867.75 1473.11,871.97 1469.07,876.96 1465.04,876.96 1461.00,877.21 1456.96,872.40 1452.93,867.58 1448.89,872.34 1444.86,877.02 1440.82,876.98 1436.79,876.92 1432.75,877.14 1428.71,877.11 1424.68,877.19 1420.64,877.15 1416.61,877.23 1412.57,877.01 1408.54,872.77 1404.50,867.89 1400.46,871.41 1396.43,876.76 1392.39,877.12 1388.36,876.82 1384.32,877.12 1380.29,876.81 1376.25,877.32 1372.21,877.07 1368.18,872.21 1364.14,867.06 1360.11,871.67 1356.07,876.81 1352.04,876.97 1348.00,876.82 1343.96,877.20 1339.93,876.92 1335.89,876.93 1331.86,876.90 1327.82,877.28 1323.79,877.26 1319.75,872.86 1315.71,867.63 1311.68,870.79 1307.64,876.09 1303.61,877.33 1299.57,877.26 1295.54,877.18 1291.50,876.87 1287.46,876.84 1283.43,876.80 1279.39,872.70 1275.36,867.64 1271.32,872.00 1267.29,876.89 1263.25,875.40 1259.21,873.56 1255.18,871.92 1251.14,869.99 1247.11,870.99 1243.07,872.77 1239.04,874.85 1235.00,876.90 1230.96,877.09 1226.93,876.78 1222.89,877.23 1218.86,877.21 1214.82,877.12 1210.79,877.16 1206.75,877.27 1202.71,877.37 1198.68,874.10 1194.64,869.86 1190.61,872.01 1186.57,876.09 1182.54,877.14 1178.50,876.83 1174.46,876.82 1170.43,877.12 1166.39,877.03 1162.36,876.83 1158.32,872.20 1154.29,867.12 1150.25,871.44 1146.21,876.81 1142.18,877.28 1138.14,876.97 1134.11,877.02 1130.07,877.18 1126.04,876.83 1122.00,876.94 1117.96,873.16 1113.93,867.23 1109.89,870.02 1105.86,875.58 1101.82,877.31 1097.79,877.28 1093.75,877.07 1089.71,876.99 1085.68,876.87 1081.64,877.19 1077.61,872.97 1073.57,866.66 1069.54,866.90 1065.50,876.96" fill="#8a1c10" fill-opacity="0.4"/>
<polygon points="1065.50,876.68 1069.54,861.34 1073.57,861.10 1077.61,870.58 1081.64,876.92 1085.68,876.59 1089.71,876.72 1093.75,876.79 1097.79,877.00 1101.82,877.03 1105.86,874.48 1109.89,865.96 1113.93,861.87 1117.96,870.75 1122.00,876.66 1126.04,876.56 1130.07,876.91 1134.11,876.74 1138.14,876.70 1142.18,877.00 1146.21,876.33 1150.25,868.22 1154.29,861.54 1158.32,869.37 1162.36,876.55 1166.39,876.75 1170.43,876.84 1174.46,876.55 1178.50,876.55 1182.54,876.86 1186.57,875.24 1190.61,868.94 1194.64,865.72 1198.68,872.17 1202.71,877.09 1206.75,876.99 1210.79,876.88 1214.82,876.84 1218.86,876.94 1222.89,876.95 1226.93,876.51 1230.96,876.81 1235.00,876.39 1239.04,873.35 1243.07,870.28 1247.11,867.51 1251.14,865.98 1255.18,868.90 1259.21,871.53 1263.25,874.36 1267.29,876.45 1271.32,869.05 1275.36,862.51 1279.39,870.07 1283.43,876.52 1287.46,876.56 1291.50,876.59 1295.54,876.90 1299.57,876.98 1303.61,877.05 1307.64,875.28 1311.68,867.34 1315.71,862.60 1319.75,870.48 1323.79,876.98 1327.82,877.00 1331.86,876.63 1335.89,876.65 1339.93,876.64 1343.96,876.92 1348.00,876.54 1352.04,876.69 1356.07,876.37 1360.11,868.59 1364.14,861.66 1368.18,869.45 1372.21,876.79 1376.25,877.04 1380.29,876.54 1384.32,876.85 1388.36,876.55 1392.39,876.84 1396.43,876.17 1400.46,868.31 1404.50,862.91 1408.54,870.29 1412.57,876.73 1416.61,876.95 1420.64,876.87 1424.68,876.91 1428.71,876.83 1432.75,876.86 1436.79,876.64 1440.82,876.71 1444.86,876.72 1448.89,869.53 1452.93,862.30 1456.96,869.63 1461.00,876.93 1465.04,876.68 1469.07,876.59 1473.11,869.10 1477.14,862.54 1481.18,869.88 1485.21,876.67 1489.25,876.69 1493.29,876.63 1497.32,876.74 1501.36,876.73 1505.39,876.80 1509.43,875.40 1513.46,868.00 1517.50,863.29 1521.54,870.58 1525.57,876.75 1529.61,876.96 1533.64,877.04 1537.68,876.92 1541.71,876.56 1545.75,876.87 1549.79,876.82 1553.82,876.50 1557.86,876.78 1561.89,876.84 1565.93,875.72 1569.96,868.47 1574.00,862.16 1574.00,862.30 1569.96,868.61 1565.93,875.86 1561.89,876.97 1557.86,876.92 1553.82,876.64 1549.79,876.96 1545.75,877.01 1541.71,876.70 1537.68,877.06 1533.64,877.18 1529.61,877.10 1525.57,876.89 1521.54,870.72 1517.50,863.42 1513.46,868.14 1509.43,875.54 1505.39,876.94 1501.36,876.87 1497.32,876.88 1493.29,876.77 1489.25,876.83 1485.21,876.81 1481.18,870.02 1477.14,862.68 1473.11,869.24 1469.07,876.73 1465.04,876.82 1461.00,877.07 1456.96,869.77 1452.93,862.44 1448.89,869.67 1444.86,876.86 1440.82,876.85 1436.79,876.78 1432.75,877.00 1428.71,876.97 1424.68,877.05 1420.64,877.01 1416.61,877.09 1412.57,876.87 1408.54,870.43 1404.50,863.05 1400.46,868.45 1396.43,876.31 1392.39,876.98 1388.36,876.68 1384.32,876.99 1380.29,876.67 1376.25,877.18 1372.21,876.93 1368.18,869.59 1364.14,861.80 1360.11,868.73 1356.07,876.51 1352.04,876.83 1348.00,876.68 1343.96,877.06 1339.93,876.78 1335.89,876.79 1331.86,876.77 1327.82,877.14 1323.79,877.12 1319.75,870.62 1315.71,862.74 1311.68,867.48 1307.64,875.41 1303.61,877.19 1299.57,877.12 1295.54,877.04 1291.50,876.73 1287.46,876.70 1283.43,876.66 1279.39,870.21 1275.36,862.65 1271.32,869.19 1267.29,876.59 1263.25,874.50 1259.21,871.67 1255.18,869.04 1251.14,866.12 1247.11,867.65 1243.07,870.42 1239.04,873.49 1235.00,876.53 1230.96,876.95 1226.93,876.65 1222.89,877.09 1218.86,877.07 1214.82,876.98 1210.79,877.02 1206.75,877.13 1202.71,877.23 1198.68,872.31 1194.64,865.86 1190.61,869.08 1186.57,875.38 1182.54,877.00 1178.50,876.69 1174.46,876.68 1170.43,876.98 1166.39,876.89 1162.36,876.69 1158.32,869.51 1154.29,861.68 1150.25,868.36 1146.21,876.47 1142.18,877.14 1138.14,876.83 1134.11,876.88 1130.07,877.04 1126.04,876.69 1122.00,876.80 1117.96,870.89 1113.93,862.01 1109.89,866.09 1105.86,874.62 1101.82,877.17 1097.79,877.14 1093.75,876.93 1089.71,876.85 1085.68,876.73 1081.64,877.06 1077.61,870.72 1073.57,861.23 1069.54,861.48 1065.50,876.82" fill="#EF9A45" fill-opacity="0.4"/>
<polygon points="1065.50,875.43 1069.54,859.12 1073.57,858.87 1077.61,868.94 1081.64,875.67 1085.68,875.34 1089.71,875.46 1093.75,875.54 1097.79,875.75 1101.82,875.78 1105.86,873.07 1109.89,864.01 1113.93,859.68 1117.96,869.11 1122.00,875.41 1126.04,875.30 1130.07,875.65 1134.11,875.49 1138.14,875.44 1142.18,875.75 1146.21,875.04 1150.25,866.43 1154.29,859.31 1158.32,867.65 1162.36,875.30 1166.39,875.50 1170.43,875.59 1174.46,875.29 1178.50,875.30 1182.54,875.61 1186.57,873.88 1190.61,867.17 1194.64,863.76 1198.68,870.62 1202.71,875.84 1206.75,875.74 1210.79,875.63 1214.82,875.59 1218.86,875.68 1222.89,875.70 1226.93,875.26 1230.96,875.56 1235.00,875.10 1239.04,871.87 1243.07,868.62 1247.11,865.67 1251.14,864.04 1255.18,867.14 1259.21,869.96 1263.25,872.97 1267.29,875.17 1271.32,867.31 1275.36,860.36 1279.39,868.39 1283.43,875.27 1287.46,875.31 1291.50,875.34 1295.54,875.65 1299.57,875.73 1303.61,875.80 1307.64,873.93 1311.68,865.51 1315.71,860.47 1319.75,868.84 1323.79,875.73 1327.82,875.75 1331.86,875.38 1335.89,875.40 1339.93,875.39 1343.96,875.67 1348.00,875.29 1352.04,875.44 1356.07,875.09 1360.11,866.83 1364.14,859.46 1368.18,867.75 1372.21,875.54 1376.25,875.79 1380.29,875.28 1384.32,875.60 1388.36,875.29 1392.39,875.59 1396.43,874.86 1400.46,866.54 1404.50,860.79 1408.54,868.63 1412.57,875.48 1416.61,875.70 1420.64,875.62 1424.68,875.66 1428.71,875.58 1432.75,875.61 1436.79,875.39 1440.82,875.46 1444.86,875.47 1448.89,867.81 1452.93,860.12 1456.96,867.92 1461.00,875.68 1465.04,875.43 1469.07,875.33 1473.11,867.37 1477.14,860.38 1481.18,868.19 1485.21,875.42 1489.25,875.44 1493.29,875.38 1497.32,875.49 1501.36,875.48 1505.39,875.55 1509.43,874.07 1513.46,866.21 1517.50,861.19 1521.54,868.95 1525.57,875.50 1529.61,875.71 1533.64,875.79 1537.68,875.67 1541.71,875.31 1545.75,875.62 1549.79,875.57 1553.82,875.25 1557.86,875.53 1561.89,875.58 1565.93,874.42 1569.96,866.68 1574.00,859.99 1574.00,862.16 1569.96,868.47 1565.93,875.72 1561.89,876.84 1557.86,876.78 1553.82,876.50 1549.79,876.82 1545.75,876.87 1541.71,876.56 1537.68,876.92 1533.64,877.04 1529.61,876.96 1525.57,876.75 1521.54,870.58 1517.50,863.29 1513.46,868.00 1509.43,875.40 1505.39,876.80 1501.36,876.73 1497.32,876.74 1493.29,876.63 1489.25,876.69 1485.21,876.67 1481.18,869.88 1477.14,862.54 1473.11,869.10 1469.07,876.59 1465.04,876.68 1461.00,876.93 1456.96,869.63 1452.93,862.30 1448.89,869.53 1444.86,876.72 1440.82,876.71 1436.79,876.64 1432.75,876.86 1428.71,876.83 1424.68,876.91 1420.64,876.87 1416.61,876.95 1412.57,876.73 1408.54,870.29 1404.50,862.91 1400.46,868.31 1396.43,876.17 1392.39,876.84 1388.36,876.55 1384.32,876.85 1380.29,876.54 1376.25,877.04 1372.21,876.79 1368.18,869.45 1364.14,861.66 1360.11,868.59 1356.07,876.37 1352.04,876.69 1348.00,876.54 1343.96,876.92 1339.93,876.64 1335.89,876.65 1331.86,876.63 1327.82,877.00 1323.79,876.98 1319.75,870.48 1315.71,862.60 1311.68,867.34 1307.64,875.28 1303.61,877.05 1299.57,876.98 1295.54,876.90 1291.50,876.59 1287.46,876.56 1283.43,876.52 1279.39,870.07 1275.36,862.51 1271.32,869.05 1267.29,876.45 1263.25,874.36 1259.21,871.53 1255.18,868.90 1251.14,865.98 1247.11,867.51 1243.07,870.28 1239.04,873.35 1235.00,876.39 1230.96,876.81 1226.93,876.51 1222.89,876.95 1218.86,876.94 1214.82,876.84 1210.79,876.88 1206.75,876.99 1202.71,877.09 1198.68,872.17 1194.64,865.72 1190.61,868.94 1186.57,875.24 1182.54,876.86 1178.50,876.55 1174.46,876.55 1170.43,876.84 1166.39,876.75 1162.36,876.55 1158.32,869.37 1154.29,861.54 1150.25,868.22 1146.21,876.33 1142.18,877.00 1138.14,876.70 1134.11,876.74 1130.07,876.91 1126.04,876.56 1122.00,876.66 1117.96,870.75 1113.93,861.87 1109.89,865.96 1105.86,874.48 1101.82,877.03 1097.79,877.00 1093.75,876.79 1089.71,876.72 1085.68,876.59 1081.64,876.92 1077.61,870.58 1073.57,861.10 1069.54,861.34 1065.50,876.68" fill="#7a2a70" fill-opacity="0.4"/>
<polyline points="1065.50,877.96 1069.54,877.03 1073.57,876.93 1077.61,877.66 1081.64,878.22 1085.68,877.98 1089.71,877.91 1093.75,878.09 1097.79,878.24 1101.82,878.18 1105.86,878.07 1109.89,877.50 1113.93,877.15 1117.96,877.82 1122.00,878.02 1126.04,877.91 1130.07,878.13 1134.11,878.10 1138.14,877.85 1142.18,878.18 1146.21,878.12 1150.25,877.46 1154.29,877.27 1158.32,877.62 1162.36,877.85 1166.39,878.03 1170.43,877.97 1174.46,877.87 1178.50,877.88 1182.54,878.09 1186.57,878.10 1190.61,877.71 1194.64,877.45 1198.68,877.80 1202.71,878.25 1206.75,878.21 1210.79,878.24 1214.82,877.99 1218.86,878.14 1222.89,878.10 1226.93,877.89 1230.96,878.05 1235.00,878.17 1239.04,877.88 1243.07,877.50 1247.11,877.65 1251.14,877.34 1255.18,877.52 1259.21,877.71 1263.25,877.75 1267.29,878.11 1271.32,877.69 1275.36,877.13 1279.39,877.68 1283.43,877.91 1287.46,877.89 1291.50,877.91 1295.54,878.15 1299.57,878.10 1303.61,878.24 1307.64,878.04 1311.68,877.27 1315.71,876.98 1319.75,877.46 1323.79,878.16 1327.82,878.17 1331.86,877.99 1335.89,877.90 1339.93,877.98 1343.96,878.21 1348.00,877.87 1352.04,877.94 1356.07,878.14 1360.11,877.59 1364.14,876.90 1368.18,877.62 1372.21,877.95 1376.25,878.20 1380.29,877.87 1384.32,878.19 1388.36,877.84 1392.39,878.10 1396.43,878.14 1400.46,877.32 1404.50,877.16 1408.54,877.66 1412.57,877.90 1416.61,878.14 1420.64,878.15 1424.68,878.14 1428.71,878.19 1432.75,878.10 1436.79,878.01 1440.82,878.07 1444.86,878.04 1448.89,877.57 1452.93,877.14 1456.96,877.79 1461.00,878.18 1465.04,877.95 1469.07,878.10 1473.11,877.54 1477.14,877.30 1481.18,877.70 1485.21,877.93 1489.25,878.01 1493.29,877.87 1497.32,877.99 1501.36,878.04 1505.39,878.06 1509.43,877.97 1513.46,877.41 1517.50,877.01 1521.54,877.63 1525.57,877.90 1529.61,878.20 1533.64,878.22 1537.68,878.22 1541.71,877.92 1545.75,878.18 1549.79,877.97 1553.82,877.88 1557.86,878.16 1561.89,878.08 1565.93,877.79 1569.96,877.65 1574.00,877.11" fill="none" stroke="#EAB839" stroke-width="1.6" stroke-opacity="1.0" stroke-linejoin="miter" stroke-miterlimit="4"/>
<polyline points="1065.50,876.96 1069.54,866.90 1073.57,866.66 1077.61,872.97 1081.64,877.19 1085.68,876.87 1089.71,876.99 1093.75,877.07 1097.79,877.28 1101.82,877.31 1105.86,875.58 1109.89,870.02 1113.93,867.23 1117.96,873.16 1122.00,876.94 1126.04,876.83 1130.07,877.18 1134.11,877.02 1138.14,876.97 1142.18,877.28 1146.21,876.81 1150.25,871.44 1154.29,867.12 1158.32,872.20 1162.36,876.83 1166.39,877.03 1170.43,877.12 1174.46,876.82 1178.50,876.83 1182.54,877.14 1186.57,876.09 1190.61,872.01 1194.64,869.86 1198.68,874.10 1202.71,877.37 1206.75,877.27 1210.79,877.16 1214.82,877.12 1218.86,877.21 1222.89,877.23 1226.93,876.78 1230.96,877.09 1235.00,876.90 1239.04,874.85 1243.07,872.77 1247.11,870.99 1251.14,869.99 1255.18,871.92 1259.21,873.56 1263.25,875.40 1267.29,876.89 1271.32,872.00 1275.36,867.64 1279.39,872.70 1283.43,876.80 1287.46,876.84 1291.50,876.87 1295.54,877.18 1299.57,877.26 1303.61,877.33 1307.64,876.09 1311.68,870.79 1315.71,867.63 1319.75,872.86 1323.79,877.26 1327.82,877.28 1331.86,876.90 1335.89,876.93 1339.93,876.92 1343.96,877.20 1348.00,876.82 1352.04,876.97 1356.07,876.81 1360.11,871.67 1364.14,867.06 1368.18,872.21 1372.21,877.07 1376.25,877.32 1380.29,876.81 1384.32,877.12 1388.36,876.82 1392.39,877.12 1396.43,876.76 1400.46,871.41 1404.50,867.89 1408.54,872.77 1412.57,877.01 1416.61,877.23 1420.64,877.15 1424.68,877.19 1428.71,877.11 1432.75,877.14 1436.79,876.92 1440.82,876.98 1444.86,877.02 1448.89,872.34 1452.93,867.58 1456.96,872.40 1461.00,877.21 1465.04,876.96 1469.07,876.96 1473.11,871.97 1477.14,867.75 1481.18,872.58 1485.21,876.95 1489.25,876.97 1493.29,876.91 1497.32,877.02 1501.36,877.01 1505.39,877.08 1509.43,876.12 1513.46,871.22 1517.50,868.15 1521.54,872.93 1525.57,877.03 1529.61,877.24 1533.64,877.32 1537.68,877.20 1541.71,876.84 1545.75,877.15 1549.79,877.10 1553.82,876.78 1557.86,877.06 1561.89,877.11 1565.93,876.26 1569.96,871.65 1574.00,867.46" fill="none" stroke="#1F4E8C" stroke-width="1.5" stroke-opacity="0.9" stroke-linejoin="miter" stroke-miterlimit="4"/>
<polyline points="1065.50,876.82 1069.54,861.48 1073.57,861.23 1077.61,870.72 1081.64,877.06 1085.68,876.73 1089.71,876.85 1093.75,876.93 1097.79,877.14 1101.82,877.17 1105.86,874.62 1109.89,866.09 1113.93,862.01 1117.96,870.89 1122.00,876.80 1126.04,876.69 1130.07,877.04 1134.11,876.88 1138.14,876.83 1142.18,877.14 1146.21,876.47 1150.25,868.36 1154.29,861.68 1158.32,869.51 1162.36,876.69 1166.39,876.89 1170.43,876.98 1174.46,876.68 1178.50,876.69 1182.54,877.00 1186.57,875.38 1190.61,869.08 1194.64,865.86 1198.68,872.31 1202.71,877.23 1206.75,877.13 1210.79,877.02 1214.82,876.98 1218.86,877.07 1222.89,877.09 1226.93,876.65 1230.96,876.95 1235.00,876.53 1239.04,873.49 1243.07,870.42 1247.11,867.65 1251.14,866.12 1255.18,869.04 1259.21,871.67 1263.25,874.50 1267.29,876.59 1271.32,869.19 1275.36,862.65 1279.39,870.21 1283.43,876.66 1287.46,876.70 1291.50,876.73 1295.54,877.04 1299.57,877.12 1303.61,877.19 1307.64,875.41 1311.68,867.48 1315.71,862.74 1319.75,870.62 1323.79,877.12 1327.82,877.14 1331.86,876.77 1335.89,876.79 1339.93,876.78 1343.96,877.06 1348.00,876.68 1352.04,876.83 1356.07,876.51 1360.11,868.73 1364.14,861.80 1368.18,869.59 1372.21,876.93 1376.25,877.18 1380.29,876.67 1384.32,876.99 1388.36,876.68 1392.39,876.98 1396.43,876.31 1400.46,868.45 1404.50,863.05 1408.54,870.43 1412.57,876.87 1416.61,877.09 1420.64,877.01 1424.68,877.05 1428.71,876.97 1432.75,877.00 1436.79,876.78 1440.82,876.85 1444.86,876.86 1448.89,869.67 1452.93,862.44 1456.96,869.77 1461.00,877.07 1465.04,876.82 1469.07,876.73 1473.11,869.24 1477.14,862.68 1481.18,870.02 1485.21,876.81 1489.25,876.83 1493.29,876.77 1497.32,876.88 1501.36,876.87 1505.39,876.94 1509.43,875.54 1513.46,868.14 1517.50,863.42 1521.54,870.72 1525.57,876.89 1529.61,877.10 1533.64,877.18 1537.68,877.06 1541.71,876.70 1545.75,877.01 1549.79,876.96 1553.82,876.64 1557.86,876.92 1561.89,876.97 1565.93,875.86 1569.96,868.61 1574.00,862.30" fill="none" stroke="#8a1c10" stroke-width="1.3" stroke-opacity="0.6" stroke-linejoin="miter" stroke-miterlimit="4"/>
<polyline points="1065.50,875.43 1069.54,859.12 1073.57,858.87 1077.61,868.94 1081.64,875.67 1085.68,875.34 1089.71,875.46 1093.75,875.54 1097.79,875.75 1101.82,875.78 1105.86,873.07 1109.89,864.01 1113.93,859.68 1117.96,869.11 1122.00,875.41 1126.04,875.30 1130.07,875.65 1134.11,875.49 1138.14,875.44 1142.18,875.75 1146.21,875.04 1150.25,866.43 1154.29,859.31 1158.32,867.65 1162.36,875.30 1166.39,875.50 1170.43,875.59 1174.46,875.29 1178.50,875.30 1182.54,875.61 1186.57,873.88 1190.61,867.17 1194.64,863.76 1198.68,870.62 1202.71,875.84 1206.75,875.74 1210.79,875.63 1214.82,875.59 1218.86,875.68 1222.89,875.70 1226.93,875.26 1230.96,875.56 1235.00,875.10 1239.04,871.87 1243.07,868.62 1247.11,865.67 1251.14,864.04 1255.18,867.14 1259.21,869.96 1263.25,872.97 1267.29,875.17 1271.32,867.31 1275.36,860.36 1279.39,868.39 1283.43,875.27 1287.46,875.31 1291.50,875.34 1295.54,875.65 1299.57,875.73 1303.61,875.80 1307.64,873.93 1311.68,865.51 1315.71,860.47 1319.75,868.84 1323.79,875.73 1327.82,875.75 1331.86,875.38 1335.89,875.40 1339.93,875.39 1343.96,875.67 1348.00,875.29 1352.04,875.44 1356.07,875.09 1360.11,866.83 1364.14,859.46 1368.18,867.75 1372.21,875.54 1376.25,875.79 1380.29,875.28 1384.32,875.60 1388.36,875.29 1392.39,875.59 1396.43,874.86 1400.46,866.54 1404.50,860.79 1408.54,868.63 1412.57,875.48 1416.61,875.70 1420.64,875.62 1424.68,875.66 1428.71,875.58 1432.75,875.61 1436.79,875.39 1440.82,875.46 1444.86,875.47 1448.89,867.81 1452.93,860.12 1456.96,867.92 1461.00,875.68 1465.04,875.43 1469.07,875.33 1473.11,867.37 1477.14,860.38 1481.18,868.19 1485.21,875.42 1489.25,875.44 1493.29,875.38 1497.32,875.49 1501.36,875.48 1505.39,875.55 1509.43,874.07 1513.46,866.21 1517.50,861.19 1521.54,868.95 1525.57,875.50 1529.61,875.71 1533.64,875.79 1537.68,875.67 1541.71,875.31 1545.75,875.62 1549.79,875.57 1553.82,875.25 1557.86,875.53 1561.89,875.58 1565.93,874.42 1569.96,866.68 1574.00,859.99" fill="none" stroke="#7a2a70" stroke-width="1.5" stroke-opacity="1.0" stroke-linejoin="miter" stroke-miterlimit="4"/>
<polyline points="1065.50,879.50 1069.10,601.50 1073.57,601.50 1077.61,601.50 1081.64,601.50 1085.68,601.50 1089.71,601.50 1093.75,601.50 1097.79,601.50 1101.82,601.50 1105.86,601.50 1109.89,601.50 1113.93,601.50 1117.96,601.50 1122.00,601.50 1126.04,601.50 1130.07,601.50 1134.11,601.50 1138.14,601.50 1142.18,601.50 1146.21,601.50 1150.25,601.50 1154.29,601.50 1158.32,601.50 1162.36,601.50 1166.39,601.50 1170.43,601.50 1174.46,601.50 1178.50,601.50 1182.54,601.50 1186.57,601.50 1190.61,601.50 1194.64,601.50 1198.68,601.50 1202.71,601.50 1206.75,601.50 1210.79,601.50 1214.82,601.50 1218.86,601.50 1222.89,601.50 1226.93,601.50 1230.96,601.50 1235.00,601.50 1239.04,601.50 1243.07,601.50 1247.11,601.50 1251.14,601.50 1255.18,601.50 1259.21,601.50 1263.25,601.50 1267.29,601.50 1271.32,601.50 1275.36,601.50 1279.39,601.50 1283.43,601.50 1287.46,601.50 1291.50,601.50 1295.54,601.50 1299.57,601.50 1303.61,601.50 1307.64,601.50 1311.68,601.50 1315.71,601.50 1319.75,601.50 1323.79,601.50 1327.82,601.50 1331.86,601.50 1335.89,601.50 1339.93,601.50 1343.96,601.50 1348.00,601.50 1352.04,601.50 1356.07,601.50 1360.11,601.50 1364.14,601.50 1368.18,601.50 1372.21,601.50 1376.25,601.50 1380.29,601.50 1384.32,601.50 1388.36,601.50 1392.39,601.50 1396.43,601.50 1400.46,601.50 1404.50,601.50 1408.54,601.50 1412.57,601.50 1416.61,601.50 1420.64,601.50 1424.68,601.50 1428.71,601.50 1432.75,601.50 1436.79,601.50 1440.82,601.50 1444.86,601.50 1448.89,601.50 1452.93,601.50 1456.96,601.50 1461.00,601.50 1465.04,601.50 1469.07,601.50 1473.11,601.50 1477.14,601.50 1481.18,601.50 1485.21,601.50 1489.25,601.50 1493.29,601.50 1497.32,601.50 1501.36,601.50 1505.39,601.50 1509.43,601.50 1513.46,601.50 1517.50,601.50 1521.54,601.50 1525.57,601.50 1529.61,601.50 1533.64,601.50 1537.68,601.50 1541.71,601.50 1545.75,601.50 1549.79,601.50 1553.82,601.50 1557.86,601.50 1561.89,601.50 1565.93,601.50 1569.96,601.50 1574.00,601.50" fill="none" stroke="#88bd72" stroke-width="2.2" stroke-opacity="1.0" stroke-linejoin="miter" stroke-miterlimit="4"/>
<rect x="48.5" y="953.8" width="28" height="8" rx="4" fill="#E5BE55"/>
<text x="91.70" y="967.00" font-size="25" fill="#ccccdc" font-weight="normal" textLength="151.60" lengthAdjust="spacingAndGlyphs">Busy System</text>
<rect x="263.2" y="953.8" width="28" height="8" rx="4" fill="#214A82"/>
<text x="305.90" y="967.00" font-size="25" fill="#ccccdc" font-weight="normal" textLength="118.60" lengthAdjust="spacingAndGlyphs">Busy User</text>
<rect x="446.0" y="953.8" width="28" height="8" rx="4" fill="#882112"/>
<text x="489.10" y="967.00" font-size="25" fill="#ccccdc" font-weight="normal" textLength="132.40" lengthAdjust="spacingAndGlyphs">Busy Iowait</text>
<rect x="643.0" y="953.8" width="28" height="8" rx="4" fill="#F09B46"/>
<text x="686.50" y="967.00" font-size="25" fill="#ccccdc" font-weight="normal" textLength="118.00" lengthAdjust="spacingAndGlyphs">Busy IRQs</text>
<rect x="825.0" y="953.8" width="28" height="8" rx="4" fill="#6D2A66"/>
<text x="867.50" y="967.00" font-size="25" fill="#ccccdc" font-weight="normal" textLength="129.00" lengthAdjust="spacingAndGlyphs">Busy Other</text>
<rect x="1018.0" y="953.8" width="28" height="8" rx="4" fill="#86BB72"/>
<text x="1060.50" y="967.00" font-size="25" fill="#ccccdc" font-weight="normal" textLength="43.20" lengthAdjust="spacingAndGlyphs">Idle</text>
<rect x="1628" y="488" width="1586" height="514" rx="11" ry="11" fill="#181b1f" stroke="#2e3036" stroke-width="2"/>
<text x="1652.70" y="540.00" font-size="29" fill="#ccccdc" font-weight="normal" stroke="#ccccdc" stroke-width="0.9" textLength="194.00" lengthAdjust="spacingAndGlyphs">Memory Basic</text>
<circle cx="1895.7" cy="528.8" r="11.75" fill="none" stroke="#9b9ca6" stroke-width="2.8"/>
<circle cx="1895.7" cy="524.55" r="1.95" fill="#9b9ca6"/>
<line x1="1895.7" y1="530.20" x2="1895.7" y2="533.40" stroke="#9b9ca6" stroke-width="3.1" stroke-linecap="round"/>
<line x1="1759" y1="630.3" x2="3181" y2="630.3" stroke="#303237" stroke-width="1.3"/>
<line x1="1759" y1="680.1" x2="3181" y2="680.1" stroke="#303237" stroke-width="1.3"/>
<line x1="1759" y1="729.9" x2="3181" y2="729.9" stroke="#303237" stroke-width="1.3"/>
<line x1="1759" y1="779.7" x2="3181" y2="779.7" stroke="#303237" stroke-width="1.3"/>
<line x1="1759" y1="829.5" x2="3181" y2="829.5" stroke="#303237" stroke-width="1.3"/>
<line x1="1759" y1="879.3" x2="3181" y2="879.3" stroke="#303237" stroke-width="1.3"/>
<line x1="1803.4" y1="601.1" x2="1803.4" y2="887.2" stroke="#303237" stroke-width="1.3"/>
<line x1="1922.0" y1="601.1" x2="1922.0" y2="887.2" stroke="#303237" stroke-width="1.3"/>
<line x1="2040.5" y1="601.1" x2="2040.5" y2="887.2" stroke="#303237" stroke-width="1.3"/>
<line x1="2159.1" y1="601.1" x2="2159.1" y2="887.2" stroke="#303237" stroke-width="1.3"/>
<line x1="2277.6" y1="601.1" x2="2277.6" y2="887.2" stroke="#303237" stroke-width="1.3"/>
<line x1="2396.2" y1="601.1" x2="2396.2" y2="887.2" stroke="#303237" stroke-width="1.3"/>
<line x1="2514.8" y1="601.1" x2="2514.8" y2="887.2" stroke="#303237" stroke-width="1.3"/>
<line x1="2633.3" y1="601.1" x2="2633.3" y2="887.2" stroke="#303237" stroke-width="1.3"/>
<line x1="2751.9" y1="601.1" x2="2751.9" y2="887.2" stroke="#303237" stroke-width="1.3"/>
<line x1="2870.4" y1="601.1" x2="2870.4" y2="887.2" stroke="#303237" stroke-width="1.3"/>
<line x1="2989.0" y1="601.1" x2="2989.0" y2="887.2" stroke="#303237" stroke-width="1.3"/>
<line x1="3107.6" y1="601.1" x2="3107.6" y2="887.2" stroke="#303237" stroke-width="1.3"/>
<text x="1652.70" y="636.50" font-size="24" fill="#ccccdc" font-weight="normal" textLength="96.60" lengthAdjust="spacingAndGlyphs">640 MiB</text>
<text x="1655.90" y="686.30" font-size="24" fill="#ccccdc" font-weight="normal" textLength="93.40" lengthAdjust="spacingAndGlyphs">512 MiB</text>
<text x="1654.10" y="736.10" font-size="24" fill="#ccccdc" font-weight="normal" textLength="95.20" lengthAdjust="spacingAndGlyphs">384 MiB</text>
<text x="1654.70" y="785.90" font-size="24" fill="#ccccdc" font-weight="normal" textLength="94.60" lengthAdjust="spacingAndGlyphs">256 MiB</text>
<text x="1654.90" y="835.70" font-size="24" fill="#ccccdc" font-weight="normal" textLength="94.40" lengthAdjust="spacingAndGlyphs">128 MiB</text>
<text x="1711.50" y="885.50" font-size="24" fill="#ccccdc" font-weight="normal" textLength="37.80" lengthAdjust="spacingAndGlyphs">0 B</text>
<text x="1769.20" y="915.60" font-size="24" fill="#ccccdc" font-weight="normal" textLength="66.80" lengthAdjust="spacingAndGlyphs">00:00</text>
<text x="1888.04" y="915.60" font-size="24" fill="#ccccdc" font-weight="normal" textLength="66.80" lengthAdjust="spacingAndGlyphs">00:30</text>
<text x="2006.88" y="915.60" font-size="24" fill="#ccccdc" font-weight="normal" textLength="66.80" lengthAdjust="spacingAndGlyphs">01:00</text>
<text x="2124.72" y="915.60" font-size="24" fill="#ccccdc" font-weight="normal" textLength="66.80" lengthAdjust="spacingAndGlyphs">01:30</text>
<text x="2243.56" y="915.60" font-size="24" fill="#ccccdc" font-weight="normal" textLength="66.80" lengthAdjust="spacingAndGlyphs">02:00</text>
<text x="2362.40" y="915.60" font-size="24" fill="#ccccdc" font-weight="normal" textLength="66.80" lengthAdjust="spacingAndGlyphs">02:30</text>
<text x="2481.24" y="915.60" font-size="24" fill="#ccccdc" font-weight="normal" textLength="66.80" lengthAdjust="spacingAndGlyphs">03:00</text>
<text x="2599.08" y="915.60" font-size="24" fill="#ccccdc" font-weight="normal" textLength="66.80" lengthAdjust="spacingAndGlyphs">03:30</text>
<text x="2717.92" y="915.60" font-size="24" fill="#ccccdc" font-weight="normal" textLength="66.80" lengthAdjust="spacingAndGlyphs">04:00</text>
<text x="2836.76" y="915.60" font-size="24" fill="#ccccdc" font-weight="normal" textLength="66.80" lengthAdjust="spacingAndGlyphs">04:30</text>
<text x="2954.60" y="915.60" font-size="24" fill="#ccccdc" font-weight="normal" textLength="67.80" lengthAdjust="spacingAndGlyphs">05:00</text>
<text x="3073.44" y="915.60" font-size="24" fill="#ccccdc" font-weight="normal" textLength="66.80" lengthAdjust="spacingAndGlyphs">05:30</text>
<polygon points="2518.00,632.50 2522.06,632.50 2526.12,630.70 2530.19,630.38 2534.25,629.30 2538.31,629.98 2542.38,630.70 2546.44,630.70 2550.50,630.70 2554.56,630.70 2558.62,630.70 2562.69,630.70 2566.75,630.70 2570.81,630.70 2574.88,630.70 2578.94,630.70 2583.00,630.70 2587.06,630.70 2591.12,630.70 2595.19,630.70 2599.25,630.70 2603.31,630.70 2607.38,630.70 2611.44,629.38 2615.50,628.98 2619.56,630.53 2623.62,630.70 2627.69,630.70 2631.75,630.70 2635.81,630.70 2639.88,630.70 2643.94,630.70 2648.00,630.70 2648.00,718.90 2518.00,718.90" fill="#C4331F" fill-opacity="0.36"/>
<polygon points="2518.00,718.90 2648.00,718.90 2647.83,741.15 2628.88,741.15 2625.00,741.93 2621.12,741.93 2616.46,755.90 2612.58,755.90 2608.70,741.15 2596.27,741.15 2592.39,741.61 2588.51,741.93 2584.63,743.79 2580.75,744.25 2576.86,748.14 2572.98,748.14 2569.10,748.91 2565.22,748.91 2561.34,738.82 2549.69,738.82 2545.81,740.06 2541.93,740.06 2537.27,743.17 2533.39,743.17 2529.50,745.81 2525.62,745.81 2521.74,721.74 2517.86,721.74" fill="#7EB26D" fill-opacity="0.4"/>
<polygon points="2517.86,721.74 2521.74,721.74 2525.62,745.81 2529.50,745.81 2533.39,743.17 2537.27,743.17 2541.93,740.06 2545.81,740.06 2549.69,738.82 2561.34,738.82 2565.22,748.91 2569.10,748.91 2572.98,748.14 2576.86,748.14 2580.75,744.25 2584.63,743.79 2588.51,741.93 2592.39,741.61 2596.27,741.15 2608.70,741.15 2612.58,755.90 2616.46,755.90 2621.12,741.93 2625.00,741.93 2628.88,741.15 2647.83,741.15 2647.83,806.83 2628.88,806.83 2625.00,807.61 2621.12,807.92 2616.46,809.16 2612.58,809.16 2608.70,806.83 2588.51,806.83 2584.63,807.61 2580.75,807.92 2576.86,809.16 2565.22,809.16 2561.34,807.14 2533.39,807.14 2529.50,809.47 2525.62,809.47 2521.74,789.75 2517.86,789.75" fill="#182c53" fill-opacity="0.4"/>
<polygon points="2517.86,789.75 2521.74,789.75 2525.62,809.47 2529.50,809.47 2533.39,807.14 2561.34,807.14 2565.22,809.16 2576.86,809.16 2580.75,807.92 2584.63,807.61 2588.51,806.83 2608.70,806.83 2612.58,809.16 2616.46,809.16 2621.12,807.92 2625.00,807.61 2628.88,806.83 2647.83,806.83 2648.00,879.30 2518.00,879.30" fill="#ECD04A" fill-opacity="0.4"/>
<polyline points="2517.86,721.74 2521.74,721.74 2525.62,745.81 2529.50,745.81 2533.39,743.17 2537.27,743.17 2541.93,740.06 2545.81,740.06 2549.69,738.82 2561.34,738.82 2565.22,748.91 2569.10,748.91 2572.98,748.14 2576.86,748.14 2580.75,744.25 2584.63,743.79 2588.51,741.93 2592.39,741.61 2596.27,741.15 2608.70,741.15 2612.58,755.90 2616.46,755.90 2621.12,741.93 2625.00,741.93 2628.88,741.15 2647.83,741.15" fill="none" stroke="#21416a" stroke-width="1.6" stroke-opacity="1.0" stroke-linejoin="miter" stroke-miterlimit="4"/>
<polyline points="2517.86,789.75 2521.74,789.75 2525.62,809.47 2529.50,809.47 2533.39,807.14 2561.34,807.14 2565.22,809.16 2576.86,809.16 2580.75,807.92 2584.63,807.61 2588.51,806.83 2608.70,806.83 2612.58,809.16 2616.46,809.16 2621.12,807.92 2625.00,807.61 2628.88,806.83 2647.83,806.83" fill="none" stroke="#ECD04A" stroke-width="2.2" stroke-opacity="1.0" stroke-linejoin="miter" stroke-miterlimit="4"/>
<polyline points="2518.00,719.50 2648.00,719.50" fill="none" stroke="#9cc888" stroke-width="2.0" stroke-opacity="1.0" stroke-linejoin="miter" stroke-miterlimit="4"/>
<polyline points="2518.00,632.50 2522.06,632.50 2526.12,630.70 2530.19,630.38 2534.25,629.30 2538.31,629.98 2542.38,630.70 2546.44,630.70 2550.50,630.70 2554.56,630.70 2558.62,630.70 2562.69,630.70 2566.75,630.70 2570.81,630.70 2574.88,630.70 2578.94,630.70 2583.00,630.70 2587.06,630.70 2591.12,630.70 2595.19,630.70 2599.25,630.70 2603.31,630.70 2607.38,630.70 2611.44,629.38 2615.50,628.98 2619.56,630.53 2623.62,630.70 2627.69,630.70 2631.75,630.70 2635.81,630.70 2639.88,630.70 2643.94,630.70 2648.00,630.70" fill="none" stroke="#cf3d1f" stroke-width="2.2" stroke-opacity="1.0" stroke-linejoin="miter" stroke-miterlimit="4"/>
<polygon points="2676.00,632.50 2679.95,632.50 2683.91,630.70 2687.86,630.70 2691.81,630.70 2695.76,630.70 2699.72,630.70 2703.67,630.70 2707.62,630.70 2711.57,630.70 2715.53,630.57 2719.48,630.24 2723.43,630.49 2727.39,630.70 2731.34,630.70 2735.29,630.70 2739.24,630.70 2743.20,630.70 2747.15,630.70 2751.10,630.70 2755.06,630.70 2759.01,630.70 2762.96,630.70 2766.91,630.70 2770.87,630.70 2774.82,630.70 2778.77,630.70 2782.72,630.70 2786.68,630.70 2790.63,630.70 2794.58,630.70 2798.54,630.70 2802.49,630.70 2806.44,630.70 2810.39,630.70 2814.35,630.70 2818.30,630.70 2822.25,630.70 2826.20,630.70 2830.16,630.70 2834.11,630.70 2838.06,630.70 2842.02,630.70 2845.97,630.70 2849.92,630.70 2853.87,630.70 2857.83,629.68 2861.78,629.57 2865.73,630.63 2869.69,630.70 2873.64,630.70 2877.59,630.70 2881.54,630.70 2885.50,630.70 2889.45,630.70 2893.40,630.70 2897.35,630.70 2901.31,630.70 2905.26,630.70 2909.21,630.70 2913.17,630.70 2917.12,630.70 2921.07,630.70 2925.02,630.70 2928.98,630.70 2932.93,630.70 2936.88,630.70 2940.83,630.70 2944.79,630.70 2948.74,630.70 2952.69,630.70 2956.65,630.70 2960.60,630.70 2964.55,630.70 2968.50,630.70 2972.46,630.70 2976.41,630.70 2980.36,630.70 2984.31,630.70 2988.27,630.70 2992.22,630.70 2996.17,630.41 3000.13,629.92 3004.08,630.44 3008.03,630.70 3011.98,630.70 3015.94,630.70 3019.89,630.70 3023.84,630.70 3027.80,630.70 3031.75,630.70 3035.70,630.70 3039.65,630.70 3043.61,630.70 3047.56,630.70 3051.51,630.70 3055.46,630.70 3059.42,630.70 3063.37,630.70 3067.32,630.70 3071.28,630.70 3075.23,630.70 3079.18,630.70 3083.13,630.70 3087.09,630.70 3091.04,630.70 3094.99,630.70 3098.94,630.70 3102.90,630.70 3106.85,630.70 3110.80,630.70 3114.76,630.70 3118.71,630.70 3122.66,630.70 3126.61,630.70 3130.57,630.70 3134.52,630.70 3138.47,630.70 3142.43,630.70 3146.38,630.38 3150.33,629.94 3154.28,630.47 3158.24,630.70 3162.19,630.70 3166.14,630.70 3170.09,630.70 3174.05,630.70 3178.00,630.70 3178.00,718.90 2676.00,718.90" fill="#C4331F" fill-opacity="0.36"/>
<polygon points="2676.00,718.90 3178.00,718.90 3178.00,736.53 3174.29,738.62 3170.26,744.65 3166.22,745.77 3162.18,735.06 3158.14,735.69 3154.11,744.62 3150.07,746.16 3146.03,738.01 3142.00,742.40 3137.96,747.13 3133.92,732.81 3129.88,736.83 3127.87,739.37 3123.83,734.96 3119.79,731.68 3115.75,737.49 3111.72,738.66 3107.68,736.13 3103.64,740.16 3099.61,741.57 3095.57,745.93 3091.53,736.42 3087.49,738.92 3083.46,746.55 3079.42,748.20 3075.38,744.77 3071.35,746.24 3067.31,739.41 3063.27,742.76 3059.23,747.13 3055.20,744.09 3051.16,738.68 3048.13,740.76 3044.10,736.41 3040.06,739.15 3036.02,738.92 3031.98,737.02 3027.95,742.01 3023.91,738.58 3019.87,732.77 3015.84,729.19 3011.80,731.10 3007.76,730.63 3004.73,741.93 3000.70,739.19 2996.66,736.62 2992.62,738.23 2988.58,737.73 2984.55,737.21 2980.51,736.84 2976.47,736.52 2972.44,739.21 2968.40,739.28 2964.36,741.80 2960.32,740.54 2957.30,738.74 2953.26,735.73 2949.22,738.94 2945.19,735.74 2941.15,731.88 2937.11,729.22 2933.07,737.65 2929.04,738.17 2925.35,744.92 2921.31,743.73 2917.27,729.12 2913.24,730.89 2909.20,739.49 2905.16,737.30 2901.13,738.90 2897.09,741.54 2893.56,737.14 2889.52,738.29 2885.48,731.12 2881.95,733.29 2877.91,745.71 2873.88,746.05 2869.84,737.21 2865.80,737.02 2861.76,747.55 2858.23,743.55 2854.19,721.75 2850.16,724.89 2846.12,736.34 2842.08,736.47 2838.05,741.81 2834.01,742.67 2829.97,735.80 2825.93,741.87 2821.90,745.43 2817.86,730.35 2814.33,738.32 2810.29,740.76 2806.25,740.61 2802.22,739.67 2798.68,740.17 2795.15,738.60 2791.11,730.92 2787.08,731.10 2783.04,735.83 2779.00,738.38 2774.97,731.12 2770.93,730.39 2766.89,739.14 2762.85,739.10 2758.82,730.36 2755.28,729.48 2751.25,728.98 2747.21,726.96 2743.17,726.73 2739.14,728.09 2735.10,736.30 2731.57,736.11 2727.53,733.44 2723.49,731.32 2719.96,744.82 2715.92,744.82 2711.89,741.27 2708.35,743.50 2704.32,743.17 2700.28,743.68 2696.24,741.37 2692.20,741.52 2688.17,744.12 2684.13,744.08 2680.09,731.29 2676.00,731.29" fill="#7EB26D" fill-opacity="0.4"/>
<polygon points="2676.00,731.29 2680.09,731.29 2684.13,744.08 2688.17,744.12 2692.20,741.52 2696.24,741.37 2700.28,743.68 2704.32,743.17 2708.35,743.50 2711.89,741.27 2715.92,744.82 2719.96,744.82 2723.49,731.32 2727.53,733.44 2731.57,736.11 2735.10,736.30 2739.14,728.09 2743.17,726.73 2747.21,726.96 2751.25,728.98 2755.28,729.48 2758.82,730.36 2762.85,739.10 2766.89,739.14 2770.93,730.39 2774.97,731.12 2779.00,738.38 2783.04,735.83 2787.08,731.10 2791.11,730.92 2795.15,738.60 2798.68,740.17 2802.22,739.67 2806.25,740.61 2810.29,740.76 2814.33,738.32 2817.86,730.35 2821.90,745.43 2825.93,741.87 2829.97,735.80 2834.01,742.67 2838.05,741.81 2842.08,736.47 2846.12,736.34 2850.16,724.89 2854.19,721.75 2858.23,743.55 2861.76,747.55 2865.80,737.02 2869.84,737.21 2873.88,746.05 2877.91,745.71 2881.95,733.29 2885.48,731.12 2889.52,738.29 2893.56,737.14 2897.09,741.54 2901.13,738.90 2905.16,737.30 2909.20,739.49 2913.24,730.89 2917.27,729.12 2921.31,743.73 2925.35,744.92 2929.04,738.17 2933.07,737.65 2937.11,729.22 2941.15,731.88 2945.19,735.74 2949.22,738.94 2953.26,735.73 2957.30,738.74 2960.32,740.54 2964.36,741.80 2968.40,739.28 2972.44,739.21 2976.47,736.52 2980.51,736.84 2984.55,737.21 2988.58,737.73 2992.62,738.23 2996.66,736.62 3000.70,739.19 3004.73,741.93 3007.76,730.63 3011.80,731.10 3015.84,729.19 3019.87,732.77 3023.91,738.58 3027.95,742.01 3031.98,737.02 3036.02,738.92 3040.06,739.15 3044.10,736.41 3048.13,740.76 3051.16,738.68 3055.20,744.09 3059.23,747.13 3063.27,742.76 3067.31,739.41 3071.35,746.24 3075.38,744.77 3079.42,748.20 3083.46,746.55 3087.49,738.92 3091.53,736.42 3095.57,745.93 3099.61,741.57 3103.64,740.16 3107.68,736.13 3111.72,738.66 3115.75,737.49 3119.79,731.68 3123.83,734.96 3127.87,739.37 3129.88,736.83 3133.92,732.81 3137.96,747.13 3142.00,742.40 3146.03,738.01 3150.07,746.16 3154.11,744.62 3158.14,735.69 3162.18,735.06 3166.22,745.77 3170.26,744.65 3174.29,738.62 3178.00,736.53 3178.00,798.77 3174.29,798.77 3170.26,806.34 3166.22,806.34 3162.18,798.77 3158.14,798.77 3154.11,806.34 3150.07,806.34 3146.03,798.77 3142.00,807.35 3137.96,807.35 3133.92,794.73 3129.88,800.28 3127.87,800.28 3123.83,795.74 3119.79,795.74 3115.75,798.77 3111.72,798.77 3107.68,799.78 3103.64,800.28 3099.61,806.34 3095.57,806.34 3091.53,799.78 3087.49,799.78 3083.46,808.36 3079.42,808.36 3075.38,808.36 3071.35,808.36 3067.31,803.82 3063.27,803.82 3059.23,808.36 3055.20,808.36 3051.16,801.29 3048.13,801.29 3044.10,800.79 3040.06,800.28 3036.02,800.28 3031.98,800.28 3027.95,802.30 3023.91,802.30 3019.87,793.72 3015.84,793.72 3011.80,794.73 3007.76,794.73 3004.73,802.30 3000.70,802.30 2996.66,801.29 2992.62,800.79 2988.58,798.77 2984.55,798.77 2980.51,799.78 2976.47,799.78 2972.44,801.80 2968.40,801.80 2964.36,805.33 2960.32,805.33 2957.30,800.28 2953.26,800.28 2949.22,800.28 2945.19,800.28 2941.15,792.71 2937.11,792.71 2933.07,799.28 2929.04,799.28 2925.35,807.35 2921.31,807.35 2917.27,793.72 2913.24,793.72 2909.20,801.80 2905.16,801.80 2901.13,803.31 2897.09,803.31 2893.56,801.29 2889.52,800.79 2885.48,795.74 2881.95,795.74 2877.91,808.36 2873.88,808.36 2869.84,800.79 2865.80,800.79 2861.76,808.36 2858.23,808.36 2854.19,786.66 2850.16,786.66 2846.12,800.28 2842.08,800.28 2838.05,806.34 2834.01,806.34 2829.97,799.78 2825.93,806.34 2821.90,806.34 2817.86,793.72 2814.33,803.31 2810.29,803.31 2806.25,801.29 2802.22,801.29 2798.68,800.28 2795.15,799.78 2791.11,793.72 2787.08,793.72 2783.04,800.28 2779.00,800.28 2774.97,792.71 2770.93,792.71 2766.89,799.28 2762.85,799.28 2758.82,791.71 2755.28,791.71 2751.25,791.71 2747.21,791.71 2743.17,791.71 2739.14,791.71 2735.10,798.27 2731.57,798.27 2727.53,794.23 2723.49,794.23 2719.96,807.85 2715.92,807.85 2711.89,802.81 2708.35,806.84 2704.32,806.84 2700.28,807.85 2696.24,801.80 2692.20,801.80 2688.17,808.86 2684.13,808.86 2680.09,800.79 2676.00,800.79" fill="#182c53" fill-opacity="0.4"/>
<polygon points="2676.00,800.79 2680.09,800.79 2684.13,808.86 2688.17,808.86 2692.20,801.80 2696.24,801.80 2700.28,807.85 2704.32,806.84 2708.35,806.84 2711.89,802.81 2715.92,807.85 2719.96,807.85 2723.49,794.23 2727.53,794.23 2731.57,798.27 2735.10,798.27 2739.14,791.71 2743.17,791.71 2747.21,791.71 2751.25,791.71 2755.28,791.71 2758.82,791.71 2762.85,799.28 2766.89,799.28 2770.93,792.71 2774.97,792.71 2779.00,800.28 2783.04,800.28 2787.08,793.72 2791.11,793.72 2795.15,799.78 2798.68,800.28 2802.22,801.29 2806.25,801.29 2810.29,803.31 2814.33,803.31 2817.86,793.72 2821.90,806.34 2825.93,806.34 2829.97,799.78 2834.01,806.34 2838.05,806.34 2842.08,800.28 2846.12,800.28 2850.16,786.66 2854.19,786.66 2858.23,808.36 2861.76,808.36 2865.80,800.79 2869.84,800.79 2873.88,808.36 2877.91,808.36 2881.95,795.74 2885.48,795.74 2889.52,800.79 2893.56,801.29 2897.09,803.31 2901.13,803.31 2905.16,801.80 2909.20,801.80 2913.24,793.72 2917.27,793.72 2921.31,807.35 2925.35,807.35 2929.04,799.28 2933.07,799.28 2937.11,792.71 2941.15,792.71 2945.19,800.28 2949.22,800.28 2953.26,800.28 2957.30,800.28 2960.32,805.33 2964.36,805.33 2968.40,801.80 2972.44,801.80 2976.47,799.78 2980.51,799.78 2984.55,798.77 2988.58,798.77 2992.62,800.79 2996.66,801.29 3000.70,802.30 3004.73,802.30 3007.76,794.73 3011.80,794.73 3015.84,793.72 3019.87,793.72 3023.91,802.30 3027.95,802.30 3031.98,800.28 3036.02,800.28 3040.06,800.28 3044.10,800.79 3048.13,801.29 3051.16,801.29 3055.20,808.36 3059.23,808.36 3063.27,803.82 3067.31,803.82 3071.35,808.36 3075.38,808.36 3079.42,808.36 3083.46,808.36 3087.49,799.78 3091.53,799.78 3095.57,806.34 3099.61,806.34 3103.64,800.28 3107.68,799.78 3111.72,798.77 3115.75,798.77 3119.79,795.74 3123.83,795.74 3127.87,800.28 3129.88,800.28 3133.92,794.73 3137.96,807.35 3142.00,807.35 3146.03,798.77 3150.07,806.34 3154.11,806.34 3158.14,798.77 3162.18,798.77 3166.22,806.34 3170.26,806.34 3174.29,798.77 3178.00,798.77 3178.00,879.30 2676.00,879.30" fill="#ECD04A" fill-opacity="0.4"/>
<polyline points="2676.00,731.29 2680.09,731.29 2684.13,744.08 2688.17,744.12 2692.20,741.52 2696.24,741.37 2700.28,743.68 2704.32,743.17 2708.35,743.50 2711.89,741.27 2715.92,744.82 2719.96,744.82 2723.49,731.32 2727.53,733.44 2731.57,736.11 2735.10,736.30 2739.14,728.09 2743.17,726.73 2747.21,726.96 2751.25,728.98 2755.28,729.48 2758.82,730.36 2762.85,739.10 2766.89,739.14 2770.93,730.39 2774.97,731.12 2779.00,738.38 2783.04,735.83 2787.08,731.10 2791.11,730.92 2795.15,738.60 2798.68,740.17 2802.22,739.67 2806.25,740.61 2810.29,740.76 2814.33,738.32 2817.86,730.35 2821.90,745.43 2825.93,741.87 2829.97,735.80 2834.01,742.67 2838.05,741.81 2842.08,736.47 2846.12,736.34 2850.16,724.89 2854.19,721.75 2858.23,743.55 2861.76,747.55 2865.80,737.02 2869.84,737.21 2873.88,746.05 2877.91,745.71 2881.95,733.29 2885.48,731.12 2889.52,738.29 2893.56,737.14 2897.09,741.54 2901.13,738.90 2905.16,737.30 2909.20,739.49 2913.24,730.89 2917.27,729.12 2921.31,743.73 2925.35,744.92 2929.04,738.17 2933.07,737.65 2937.11,729.22 2941.15,731.88 2945.19,735.74 2949.22,738.94 2953.26,735.73 2957.30,738.74 2960.32,740.54 2964.36,741.80 2968.40,739.28 2972.44,739.21 2976.47,736.52 2980.51,736.84 2984.55,737.21 2988.58,737.73 2992.62,738.23 2996.66,736.62 3000.70,739.19 3004.73,741.93 3007.76,730.63 3011.80,731.10 3015.84,729.19 3019.87,732.77 3023.91,738.58 3027.95,742.01 3031.98,737.02 3036.02,738.92 3040.06,739.15 3044.10,736.41 3048.13,740.76 3051.16,738.68 3055.20,744.09 3059.23,747.13 3063.27,742.76 3067.31,739.41 3071.35,746.24 3075.38,744.77 3079.42,748.20 3083.46,746.55 3087.49,738.92 3091.53,736.42 3095.57,745.93 3099.61,741.57 3103.64,740.16 3107.68,736.13 3111.72,738.66 3115.75,737.49 3119.79,731.68 3123.83,734.96 3127.87,739.37 3129.88,736.83 3133.92,732.81 3137.96,747.13 3142.00,742.40 3146.03,738.01 3150.07,746.16 3154.11,744.62 3158.14,735.69 3162.18,735.06 3166.22,745.77 3170.26,744.65 3174.29,738.62 3178.00,736.53" fill="none" stroke="#21416a" stroke-width="1.6" stroke-opacity="1.0" stroke-linejoin="miter" stroke-miterlimit="4"/>
<polyline points="2676.00,800.79 2680.09,800.79 2684.13,808.86 2688.17,808.86 2692.20,801.80 2696.24,801.80 2700.28,807.85 2704.32,806.84 2708.35,806.84 2711.89,802.81 2715.92,807.85 2719.96,807.85 2723.49,794.23 2727.53,794.23 2731.57,798.27 2735.10,798.27 2739.14,791.71 2743.17,791.71 2747.21,791.71 2751.25,791.71 2755.28,791.71 2758.82,791.71 2762.85,799.28 2766.89,799.28 2770.93,792.71 2774.97,792.71 2779.00,800.28 2783.04,800.28 2787.08,793.72 2791.11,793.72 2795.15,799.78 2798.68,800.28 2802.22,801.29 2806.25,801.29 2810.29,803.31 2814.33,803.31 2817.86,793.72 2821.90,806.34 2825.93,806.34 2829.97,799.78 2834.01,806.34 2838.05,806.34 2842.08,800.28 2846.12,800.28 2850.16,786.66 2854.19,786.66 2858.23,808.36 2861.76,808.36 2865.80,800.79 2869.84,800.79 2873.88,808.36 2877.91,808.36 2881.95,795.74 2885.48,795.74 2889.52,800.79 2893.56,801.29 2897.09,803.31 2901.13,803.31 2905.16,801.80 2909.20,801.80 2913.24,793.72 2917.27,793.72 2921.31,807.35 2925.35,807.35 2929.04,799.28 2933.07,799.28 2937.11,792.71 2941.15,792.71 2945.19,800.28 2949.22,800.28 2953.26,800.28 2957.30,800.28 2960.32,805.33 2964.36,805.33 2968.40,801.80 2972.44,801.80 2976.47,799.78 2980.51,799.78 2984.55,798.77 2988.58,798.77 2992.62,800.79 2996.66,801.29 3000.70,802.30 3004.73,802.30 3007.76,794.73 3011.80,794.73 3015.84,793.72 3019.87,793.72 3023.91,802.30 3027.95,802.30 3031.98,800.28 3036.02,800.28 3040.06,800.28 3044.10,800.79 3048.13,801.29 3051.16,801.29 3055.20,808.36 3059.23,808.36 3063.27,803.82 3067.31,803.82 3071.35,808.36 3075.38,808.36 3079.42,808.36 3083.46,808.36 3087.49,799.78 3091.53,799.78 3095.57,806.34 3099.61,806.34 3103.64,800.28 3107.68,799.78 3111.72,798.77 3115.75,798.77 3119.79,795.74 3123.83,795.74 3127.87,800.28 3129.88,800.28 3133.92,794.73 3137.96,807.35 3142.00,807.35 3146.03,798.77 3150.07,806.34 3154.11,806.34 3158.14,798.77 3162.18,798.77 3166.22,806.34 3170.26,806.34 3174.29,798.77 3178.00,798.77" fill="none" stroke="#ECD04A" stroke-width="2.2" stroke-opacity="1.0" stroke-linejoin="miter" stroke-miterlimit="4"/>
<polyline points="2676.00,719.50 3178.00,719.50" fill="none" stroke="#9cc888" stroke-width="2.0" stroke-opacity="1.0" stroke-linejoin="miter" stroke-miterlimit="4"/>
<polyline points="2676.00,632.50 2679.95,632.50 2683.91,630.70 2687.86,630.70 2691.81,630.70 2695.76,630.70 2699.72,630.70 2703.67,630.70 2707.62,630.70 2711.57,630.70 2715.53,630.57 2719.48,630.24 2723.43,630.49 2727.39,630.70 2731.34,630.70 2735.29,630.70 2739.24,630.70 2743.20,630.70 2747.15,630.70 2751.10,630.70 2755.06,630.70 2759.01,630.70 2762.96,630.70 2766.91,630.70 2770.87,630.70 2774.82,630.70 2778.77,630.70 2782.72,630.70 2786.68,630.70 2790.63,630.70 2794.58,630.70 2798.54,630.70 2802.49,630.70 2806.44,630.70 2810.39,630.70 2814.35,630.70 2818.30,630.70 2822.25,630.70 2826.20,630.70 2830.16,630.70 2834.11,630.70 2838.06,630.70 2842.02,630.70 2845.97,630.70 2849.92,630.70 2853.87,630.70 2857.83,629.68 2861.78,629.57 2865.73,630.63 2869.69,630.70 2873.64,630.70 2877.59,630.70 2881.54,630.70 2885.50,630.70 2889.45,630.70 2893.40,630.70 2897.35,630.70 2901.31,630.70 2905.26,630.70 2909.21,630.70 2913.17,630.70 2917.12,630.70 2921.07,630.70 2925.02,630.70 2928.98,630.70 2932.93,630.70 2936.88,630.70 2940.83,630.70 2944.79,630.70 2948.74,630.70 2952.69,630.70 2956.65,630.70 2960.60,630.70 2964.55,630.70 2968.50,630.70 2972.46,630.70 2976.41,630.70 2980.36,630.70 2984.31,630.70 2988.27,630.70 2992.22,630.70 2996.17,630.41 3000.13,629.92 3004.08,630.44 3008.03,630.70 3011.98,630.70 3015.94,630.70 3019.89,630.70 3023.84,630.70 3027.80,630.70 3031.75,630.70 3035.70,630.70 3039.65,630.70 3043.61,630.70 3047.56,630.70 3051.51,630.70 3055.46,630.70 3059.42,630.70 3063.37,630.70 3067.32,630.70 3071.28,630.70 3075.23,630.70 3079.18,630.70 3083.13,630.70 3087.09,630.70 3091.04,630.70 3094.99,630.70 3098.94,630.70 3102.90,630.70 3106.85,630.70 3110.80,630.70 3114.76,630.70 3118.71,630.70 3122.66,630.70 3126.61,630.70 3130.57,630.70 3134.52,630.70 3138.47,630.70 3142.43,630.70 3146.38,630.38 3150.33,629.94 3154.28,630.47 3158.24,630.70 3162.19,630.70 3166.14,630.70 3170.09,630.70 3174.05,630.70 3178.00,630.70" fill="none" stroke="#cf3d1f" stroke-width="2.2" stroke-opacity="1.0" stroke-linejoin="miter" stroke-miterlimit="4"/>
<rect x="1652.5" y="953.5" width="28" height="8" rx="4" fill="#E4F8D8"/>
<text x="1695.50" y="966.70" font-size="25" fill="#ccccdc" font-weight="normal" textLength="120.00" lengthAdjust="spacingAndGlyphs">RAM Total</text>
<rect x="1835.3" y="953.5" width="28" height="8" rx="4" fill="#ECD04A"/>
<text x="1877.50" y="966.70" font-size="25" fill="#ccccdc" font-weight="normal" textLength="122.60" lengthAdjust="spacingAndGlyphs">RAM Used</text>
<rect x="2021.5" y="953.5" width="28" height="8" rx="4" fill="#0D2D55"/>
<text x="2064.30" y="966.70" font-size="25" fill="#ccccdc" font-weight="normal" textLength="236.00" lengthAdjust="spacingAndGlyphs">RAM Cache + Buffer</text>
<rect x="2321.2" y="953.5" width="28" height="8" rx="4" fill="#86BB72"/>
<text x="2364.30" y="966.70" font-size="25" fill="#ccccdc" font-weight="normal" textLength="112.60" lengthAdjust="spacingAndGlyphs">RAM Free</text>
<rect x="2498.3" y="953.5" width="28" height="8" rx="4" fill="#C4331F"/>
<text x="2541.90" y="966.70" font-size="25" fill="#ccccdc" font-weight="normal" textLength="138.00" lengthAdjust="spacingAndGlyphs">SWAP Used</text>
<rect x="24" y="1020" width="1586" height="514" rx="11" ry="11" fill="#181b1f" stroke="#2e3036" stroke-width="2"/>
<text x="48.30" y="1072.20" font-size="29" fill="#ccccdc" font-weight="normal" stroke="#ccccdc" stroke-width="0.9" textLength="293.20" lengthAdjust="spacingAndGlyphs">Network Traffic Basic</text>
<circle cx="391.7" cy="1061.0" r="11.75" fill="none" stroke="#9b9ca6" stroke-width="2.8"/>
<circle cx="391.7" cy="1056.75" r="1.95" fill="#9b9ca6"/>
<line x1="391.7" y1="1062.40" x2="391.7" y2="1065.60" stroke="#9b9ca6" stroke-width="3.1" stroke-linecap="round"/>
<line x1="151" y1="1154.8" x2="1577" y2="1154.8" stroke="#303237" stroke-width="1.3"/>
<line x1="151" y1="1210.6" x2="1577" y2="1210.6" stroke="#303237" stroke-width="1.3"/>
<line x1="151" y1="1266.5" x2="1577" y2="1266.5" stroke="#303237" stroke-width="1.3"/>
<line x1="151" y1="1322.3" x2="1577" y2="1322.3" stroke="#303237" stroke-width="1.3"/>
<line x1="151" y1="1378.2" x2="1577" y2="1378.2" stroke="#303237" stroke-width="1.3"/>
<line x1="195.4" y1="1133.5" x2="195.4" y2="1418.6" stroke="#303237" stroke-width="1.3"/>
<line x1="314.2" y1="1133.5" x2="314.2" y2="1418.6" stroke="#303237" stroke-width="1.3"/>
<line x1="433.1" y1="1133.5" x2="433.1" y2="1418.6" stroke="#303237" stroke-width="1.3"/>
<line x1="551.9" y1="1133.5" x2="551.9" y2="1418.6" stroke="#303237" stroke-width="1.3"/>
<line x1="670.7" y1="1133.5" x2="670.7" y2="1418.6" stroke="#303237" stroke-width="1.3"/>
<line x1="789.5" y1="1133.5" x2="789.5" y2="1418.6" stroke="#303237" stroke-width="1.3"/>
<line x1="908.4" y1="1133.5" x2="908.4" y2="1418.6" stroke="#303237" stroke-width="1.3"/>
<line x1="1027.2" y1="1133.5" x2="1027.2" y2="1418.6" stroke="#303237" stroke-width="1.3"/>
<line x1="1146.0" y1="1133.5" x2="1146.0" y2="1418.6" stroke="#303237" stroke-width="1.3"/>
<line x1="1264.9" y1="1133.5" x2="1264.9" y2="1418.6" stroke="#303237" stroke-width="1.3"/>
<line x1="1383.7" y1="1133.5" x2="1383.7" y2="1418.6" stroke="#303237" stroke-width="1.3"/>
<line x1="1502.5" y1="1133.5" x2="1502.5" y2="1418.6" stroke="#303237" stroke-width="1.3"/>
<text x="58.50" y="1161.00" font-size="24" fill="#ccccdc" font-weight="normal" textLength="81.60" lengthAdjust="spacingAndGlyphs">10 kb/s</text>
<text x="71.50" y="1216.85" font-size="24" fill="#ccccdc" font-weight="normal" textLength="68.60" lengthAdjust="spacingAndGlyphs">5 kb/s</text>
<text x="82.50" y="1272.70" font-size="24" fill="#ccccdc" font-weight="normal" textLength="57.60" lengthAdjust="spacingAndGlyphs">0 b/s</text>
<text x="60.10" y="1328.55" font-size="24" fill="#ccccdc" font-weight="normal" textLength="80.00" lengthAdjust="spacingAndGlyphs">-5 kb/s</text>
<text x="49.30" y="1384.40" font-size="24" fill="#ccccdc" font-weight="normal" textLength="90.80" lengthAdjust="spacingAndGlyphs">-10 kb/s</text>
<text x="161.20" y="1447.50" font-size="24" fill="#ccccdc" font-weight="normal" textLength="66.80" lengthAdjust="spacingAndGlyphs">00:00</text>
<text x="279.82" y="1447.50" font-size="24" fill="#ccccdc" font-weight="normal" textLength="67.80" lengthAdjust="spacingAndGlyphs">00:30</text>
<text x="399.44" y="1447.50" font-size="24" fill="#ccccdc" font-weight="normal" textLength="66.80" lengthAdjust="spacingAndGlyphs">01:00</text>
<text x="518.06" y="1447.50" font-size="24" fill="#ccccdc" font-weight="normal" textLength="66.80" lengthAdjust="spacingAndGlyphs">01:30</text>
<text x="636.68" y="1447.50" font-size="24" fill="#ccccdc" font-weight="normal" textLength="66.80" lengthAdjust="spacingAndGlyphs">02:00</text>
<text x="755.30" y="1447.50" font-size="24" fill="#ccccdc" font-weight="normal" textLength="66.80" lengthAdjust="spacingAndGlyphs">02:30</text>
<text x="874.92" y="1447.50" font-size="24" fill="#ccccdc" font-weight="normal" textLength="66.80" lengthAdjust="spacingAndGlyphs">03:00</text>
<text x="993.54" y="1447.50" font-size="24" fill="#ccccdc" font-weight="normal" textLength="66.80" lengthAdjust="spacingAndGlyphs">03:30</text>
<text x="1112.16" y="1447.50" font-size="24" fill="#ccccdc" font-weight="normal" textLength="66.80" lengthAdjust="spacingAndGlyphs">04:00</text>
<text x="1230.78" y="1447.50" font-size="24" fill="#ccccdc" font-weight="normal" textLength="66.80" lengthAdjust="spacingAndGlyphs">04:30</text>
<text x="1349.40" y="1447.50" font-size="24" fill="#ccccdc" font-weight="normal" textLength="66.80" lengthAdjust="spacingAndGlyphs">05:00</text>
<text x="1469.02" y="1447.50" font-size="24" fill="#ccccdc" font-weight="normal" textLength="66.80" lengthAdjust="spacingAndGlyphs">05:30</text>
<polygon points="915.00,1266.00 918.95,1249.60 922.94,1258.10 926.94,1249.60 930.93,1258.10 934.92,1249.60 938.91,1258.10 942.91,1249.60 946.90,1258.10 950.89,1249.60 954.89,1258.10 958.88,1232.50 962.87,1240.40 966.86,1232.50 970.86,1258.10 974.85,1249.60 978.84,1258.10 982.84,1249.60 986.83,1258.10 990.82,1249.60 994.81,1258.10 998.81,1249.60 1002.80,1258.10 1006.79,1232.50 1010.79,1240.40 1014.78,1232.50 1018.77,1258.10 1022.76,1249.60 1026.76,1258.10 1030.75,1249.60 1034.70,1266.00 1034.70,1266.00 915.00,1266.00" fill="#7EB26D" fill-opacity="0.4"/>
<polygon points="915.00,1266.00 919.00,1297.40 922.90,1299.40 926.94,1329.80 930.93,1297.40 934.92,1329.80 938.91,1297.40 942.91,1329.80 946.90,1297.40 950.89,1329.80 954.89,1297.40 958.88,1345.60 962.87,1313.10 966.86,1345.60 970.86,1297.40 974.85,1329.80 978.84,1297.40 982.84,1329.80 986.83,1297.40 990.82,1329.80 994.81,1297.40 998.81,1329.80 1002.80,1297.40 1006.79,1345.60 1010.79,1313.10 1014.78,1345.60 1018.77,1297.40 1022.76,1329.80 1026.76,1297.40 1030.75,1329.80 1034.70,1266.00 1034.70,1266.00 915.00,1266.00" fill="#ECD04A" fill-opacity="0.4"/>
<polyline points="915.00,1266.00 918.95,1249.60 922.94,1258.10 926.94,1249.60 930.93,1258.10 934.92,1249.60 938.91,1258.10 942.91,1249.60 946.90,1258.10 950.89,1249.60 954.89,1258.10 958.88,1232.50 962.87,1240.40 966.86,1232.50 970.86,1258.10 974.85,1249.60 978.84,1258.10 982.84,1249.60 986.83,1258.10 990.82,1249.60 994.81,1258.10 998.81,1249.60 1002.80,1258.10 1006.79,1232.50 1010.79,1240.40 1014.78,1232.50 1018.77,1258.10 1022.76,1249.60 1026.76,1258.10 1030.75,1249.60 1034.70,1266.00" fill="none" stroke="#86C36F" stroke-width="2.2" stroke-opacity="1.0" stroke-linejoin="miter" stroke-miterlimit="4"/>
<polyline points="915.00,1266.00 919.00,1297.40 922.90,1299.40 926.94,1329.80 930.93,1297.40 934.92,1329.80 938.91,1297.40 942.91,1329.80 946.90,1297.40 950.89,1329.80 954.89,1297.40 958.88,1345.60 962.87,1313.10 966.86,1345.60 970.86,1297.40 974.85,1329.80 978.84,1297.40 982.84,1329.80 986.83,1297.40 990.82,1329.80 994.81,1297.40 998.81,1329.80 1002.80,1297.40 1006.79,1345.60 1010.79,1313.10 1014.78,1345.60 1018.77,1297.40 1022.76,1329.80 1026.76,1297.40 1030.75,1329.80 1034.70,1266.00" fill="none" stroke="#F2D447" stroke-width="2.2" stroke-opacity="1.0" stroke-linejoin="miter" stroke-miterlimit="4"/>
<polygon points="1075.60,1266.00 1079.50,1164.70 1083.40,1182.40 1087.40,1173.60 1090.70,1258.10 1094.30,1250.20 1097.60,1252.20 1101.50,1252.20 1105.40,1253.00 1109.20,1256.10 1113.20,1256.10 1117.30,1239.40 1121.00,1240.40 1125.60,1232.50 1129.50,1258.10 1133.47,1249.60 1137.43,1258.10 1141.40,1249.60 1145.36,1258.10 1149.33,1249.60 1153.30,1258.10 1157.26,1232.50 1161.23,1240.40 1165.19,1232.50 1169.16,1258.10 1173.13,1249.60 1177.09,1258.10 1181.06,1249.60 1185.03,1258.10 1188.99,1249.60 1192.96,1258.10 1196.92,1232.50 1200.89,1240.40 1204.86,1232.50 1208.82,1258.10 1212.79,1252.50 1216.75,1252.50 1220.72,1252.50 1224.69,1252.50 1228.65,1252.50 1232.62,1252.50 1236.58,1252.50 1240.55,1258.10 1244.52,1232.50 1248.48,1240.40 1252.45,1232.50 1256.41,1258.10 1260.38,1249.60 1264.35,1258.10 1268.31,1249.60 1272.28,1258.10 1276.24,1232.50 1280.21,1240.40 1284.18,1232.50 1288.14,1258.10 1292.11,1249.60 1296.08,1258.10 1300.04,1249.60 1304.01,1258.10 1307.97,1249.60 1311.94,1258.10 1315.91,1232.50 1319.87,1240.40 1323.84,1232.50 1327.80,1258.10 1331.77,1249.60 1335.74,1258.10 1339.70,1249.60 1343.67,1258.10 1347.63,1249.60 1351.60,1258.10 1355.57,1249.60 1359.53,1258.10 1363.50,1232.50 1367.46,1240.40 1371.43,1232.50 1375.40,1258.10 1379.36,1249.60 1383.33,1258.10 1387.29,1249.60 1391.26,1258.10 1395.23,1249.60 1399.19,1258.10 1403.16,1232.50 1407.12,1240.40 1411.09,1232.50 1415.06,1258.10 1419.02,1249.60 1422.99,1258.10 1426.96,1249.60 1430.92,1258.10 1434.89,1249.60 1438.85,1258.10 1442.82,1249.60 1446.79,1258.10 1450.75,1232.50 1454.72,1240.40 1458.68,1232.50 1462.65,1258.10 1466.62,1249.60 1470.58,1258.10 1474.55,1232.50 1478.51,1240.40 1482.48,1232.50 1486.45,1258.10 1490.41,1249.60 1494.38,1258.10 1498.34,1249.60 1502.31,1258.10 1506.28,1249.60 1510.24,1258.10 1514.21,1232.50 1518.18,1240.40 1522.14,1232.50 1526.11,1258.10 1530.07,1249.60 1534.04,1252.50 1538.01,1252.50 1541.97,1252.50 1545.94,1252.50 1549.90,1252.50 1553.87,1249.60 1557.84,1258.10 1561.80,1249.60 1565.77,1258.10 1569.73,1232.50 1573.70,1239.60 1573.70,1266.00 1075.60,1266.00" fill="#7EB26D" fill-opacity="0.4"/>
<polygon points="1075.60,1266.00 1079.50,1372.10 1083.40,1354.40 1087.40,1385.90 1090.70,1297.40 1094.30,1329.80 1097.60,1315.10 1101.50,1315.10 1105.40,1313.10 1109.20,1312.10 1113.20,1312.10 1117.30,1327.90 1121.00,1313.10 1125.60,1344.60 1129.50,1297.40 1133.47,1329.80 1137.43,1297.40 1141.40,1329.80 1145.36,1297.40 1149.33,1329.80 1153.30,1297.40 1157.26,1345.60 1161.23,1313.10 1165.19,1345.60 1169.16,1297.40 1173.13,1329.80 1177.09,1297.40 1181.06,1329.80 1185.03,1297.40 1188.99,1329.80 1192.96,1297.40 1196.92,1345.60 1200.89,1313.10 1204.86,1345.60 1208.82,1297.40 1212.79,1313.50 1216.75,1313.50 1220.72,1313.50 1224.69,1313.50 1228.65,1313.50 1232.62,1313.50 1236.58,1313.50 1240.55,1297.40 1244.52,1345.60 1248.48,1313.10 1252.45,1345.60 1256.41,1297.40 1260.38,1329.80 1264.35,1297.40 1268.31,1329.80 1272.28,1297.40 1276.24,1345.60 1280.21,1313.10 1284.18,1345.60 1288.14,1297.40 1292.11,1329.80 1296.08,1297.40 1300.04,1329.80 1304.01,1297.40 1307.97,1329.80 1311.94,1297.40 1315.91,1345.60 1319.87,1313.10 1323.84,1345.60 1327.80,1297.40 1331.77,1329.80 1335.74,1297.40 1339.70,1329.80 1343.67,1297.40 1347.63,1329.80 1351.60,1297.40 1355.57,1329.80 1359.53,1297.40 1363.50,1345.60 1367.46,1313.10 1371.43,1345.60 1375.40,1297.40 1379.36,1329.80 1383.33,1297.40 1387.29,1329.80 1391.26,1297.40 1395.23,1329.80 1399.19,1297.40 1403.16,1345.60 1407.12,1313.10 1411.09,1345.60 1415.06,1297.40 1419.02,1329.80 1422.99,1297.40 1426.96,1329.80 1430.92,1297.40 1434.89,1329.80 1438.85,1297.40 1442.82,1329.80 1446.79,1297.40 1450.75,1345.60 1454.72,1313.10 1458.68,1345.60 1462.65,1297.40 1466.62,1329.80 1470.58,1297.40 1474.55,1345.60 1478.51,1313.10 1482.48,1345.60 1486.45,1297.40 1490.41,1329.80 1494.38,1297.40 1498.34,1329.80 1502.31,1297.40 1506.28,1329.80 1510.24,1297.40 1514.21,1345.60 1518.18,1313.10 1522.14,1345.60 1526.11,1297.40 1530.07,1329.80 1534.04,1313.50 1538.01,1313.50 1541.97,1313.50 1545.94,1313.50 1549.90,1313.50 1553.87,1329.80 1557.84,1297.40 1561.80,1329.80 1565.77,1297.40 1569.73,1345.60 1573.70,1313.80 1573.70,1266.00 1075.60,1266.00" fill="#ECD04A" fill-opacity="0.4"/>
<polyline points="1075.60,1266.00 1079.50,1164.70 1083.40,1182.40 1087.40,1173.60 1090.70,1258.10 1094.30,1250.20 1097.60,1252.20 1101.50,1252.20 1105.40,1253.00 1109.20,1256.10 1113.20,1256.10 1117.30,1239.40 1121.00,1240.40 1125.60,1232.50 1129.50,1258.10 1133.47,1249.60 1137.43,1258.10 1141.40,1249.60 1145.36,1258.10 1149.33,1249.60 1153.30,1258.10 1157.26,1232.50 1161.23,1240.40 1165.19,1232.50 1169.16,1258.10 1173.13,1249.60 1177.09,1258.10 1181.06,1249.60 1185.03,1258.10 1188.99,1249.60 1192.96,1258.10 1196.92,1232.50 1200.89,1240.40 1204.86,1232.50 1208.82,1258.10 1212.79,1252.50 1216.75,1252.50 1220.72,1252.50 1224.69,1252.50 1228.65,1252.50 1232.62,1252.50 1236.58,1252.50 1240.55,1258.10 1244.52,1232.50 1248.48,1240.40 1252.45,1232.50 1256.41,1258.10 1260.38,1249.60 1264.35,1258.10 1268.31,1249.60 1272.28,1258.10 1276.24,1232.50 1280.21,1240.40 1284.18,1232.50 1288.14,1258.10 1292.11,1249.60 1296.08,1258.10 1300.04,1249.60 1304.01,1258.10 1307.97,1249.60 1311.94,1258.10 1315.91,1232.50 1319.87,1240.40 1323.84,1232.50 1327.80,1258.10 1331.77,1249.60 1335.74,1258.10 1339.70,1249.60 1343.67,1258.10 1347.63,1249.60 1351.60,1258.10 1355.57,1249.60 1359.53,1258.10 1363.50,1232.50 1367.46,1240.40 1371.43,1232.50 1375.40,1258.10 1379.36,1249.60 1383.33,1258.10 1387.29,1249.60 1391.26,1258.10 1395.23,1249.60 1399.19,1258.10 1403.16,1232.50 1407.12,1240.40 1411.09,1232.50 1415.06,1258.10 1419.02,1249.60 1422.99,1258.10 1426.96,1249.60 1430.92,1258.10 1434.89,1249.60 1438.85,1258.10 1442.82,1249.60 1446.79,1258.10 1450.75,1232.50 1454.72,1240.40 1458.68,1232.50 1462.65,1258.10 1466.62,1249.60 1470.58,1258.10 1474.55,1232.50 1478.51,1240.40 1482.48,1232.50 1486.45,1258.10 1490.41,1249.60 1494.38,1258.10 1498.34,1249.60 1502.31,1258.10 1506.28,1249.60 1510.24,1258.10 1514.21,1232.50 1518.18,1240.40 1522.14,1232.50 1526.11,1258.10 1530.07,1249.60 1534.04,1252.50 1538.01,1252.50 1541.97,1252.50 1545.94,1252.50 1549.90,1252.50 1553.87,1249.60 1557.84,1258.10 1561.80,1249.60 1565.77,1258.10 1569.73,1232.50 1573.70,1239.60" fill="none" stroke="#86C36F" stroke-width="2.2" stroke-opacity="1.0" stroke-linejoin="miter" stroke-miterlimit="4"/>
<polyline points="1075.60,1266.00 1079.50,1372.10 1083.40,1354.40 1087.40,1385.90 1090.70,1297.40 1094.30,1329.80 1097.60,1315.10 1101.50,1315.10 1105.40,1313.10 1109.20,1312.10 1113.20,1312.10 1117.30,1327.90 1121.00,1313.10 1125.60,1344.60 1129.50,1297.40 1133.47,1329.80 1137.43,1297.40 1141.40,1329.80 1145.36,1297.40 1149.33,1329.80 1153.30,1297.40 1157.26,1345.60 1161.23,1313.10 1165.19,1345.60 1169.16,1297.40 1173.13,1329.80 1177.09,1297.40 1181.06,1329.80 1185.03,1297.40 1188.99,1329.80 1192.96,1297.40 1196.92,1345.60 1200.89,1313.10 1204.86,1345.60 1208.82,1297.40 1212.79,1313.50 1216.75,1313.50 1220.72,1313.50 1224.69,1313.50 1228.65,1313.50 1232.62,1313.50 1236.58,1313.50 1240.55,1297.40 1244.52,1345.60 1248.48,1313.10 1252.45,1345.60 1256.41,1297.40 1260.38,1329.80 1264.35,1297.40 1268.31,1329.80 1272.28,1297.40 1276.24,1345.60 1280.21,1313.10 1284.18,1345.60 1288.14,1297.40 1292.11,1329.80 1296.08,1297.40 1300.04,1329.80 1304.01,1297.40 1307.97,1329.80 1311.94,1297.40 1315.91,1345.60 1319.87,1313.10 1323.84,1345.60 1327.80,1297.40 1331.77,1329.80 1335.74,1297.40 1339.70,1329.80 1343.67,1297.40 1347.63,1329.80 1351.60,1297.40 1355.57,1329.80 1359.53,1297.40 1363.50,1345.60 1367.46,1313.10 1371.43,1345.60 1375.40,1297.40 1379.36,1329.80 1383.33,1297.40 1387.29,1329.80 1391.26,1297.40 1395.23,1329.80 1399.19,1297.40 1403.16,1345.60 1407.12,1313.10 1411.09,1345.60 1415.06,1297.40 1419.02,1329.80 1422.99,1297.40 1426.96,1329.80 1430.92,1297.40 1434.89,1329.80 1438.85,1297.40 1442.82,1329.80 1446.79,1297.40 1450.75,1345.60 1454.72,1313.10 1458.68,1345.60 1462.65,1297.40 1466.62,1329.80 1470.58,1297.40 1474.55,1345.60 1478.51,1313.10 1482.48,1345.60 1486.45,1297.40 1490.41,1329.80 1494.38,1297.40 1498.34,1329.80 1502.31,1297.40 1506.28,1329.80 1510.24,1297.40 1514.21,1345.60 1518.18,1313.10 1522.14,1345.60 1526.11,1297.40 1530.07,1329.80 1534.04,1313.50 1538.01,1313.50 1541.97,1313.50 1545.94,1313.50 1549.90,1313.50 1553.87,1329.80 1557.84,1297.40 1561.80,1329.80 1565.77,1297.40 1569.73,1345.60 1573.70,1313.80" fill="none" stroke="#F2D447" stroke-width="2.2" stroke-opacity="1.0" stroke-linejoin="miter" stroke-miterlimit="4"/>
<rect x="48.9" y="1485.3" width="28" height="8" rx="4" fill="#86BB72"/>
<text x="91.70" y="1498.50" font-size="25" fill="#ccccdc" font-weight="normal" textLength="114.20" lengthAdjust="spacingAndGlyphs">recv ens5</text>
<rect x="227.4" y="1485.3" width="28" height="8" rx="4" fill="#ECD04A"/>
<text x="271.50" y="1498.50" font-size="25" fill="#ccccdc" font-weight="normal" textLength="121.80" lengthAdjust="spacingAndGlyphs">trans ens5</text>
<rect x="1628" y="1020" width="1586" height="514" rx="11" ry="11" fill="#181b1f" stroke="#2e3036" stroke-width="2"/>
<text x="1652.50" y="1072.20" font-size="29" fill="#ccccdc" font-weight="normal" stroke="#ccccdc" stroke-width="0.9" textLength="455.00" lengthAdjust="spacingAndGlyphs">Disk Space Used, EBS IO Balance</text>
<circle cx="2156.4" cy="1061.0" r="11.75" fill="none" stroke="#9b9ca6" stroke-width="2.8"/>
<circle cx="2156.4" cy="1056.75" r="1.95" fill="#9b9ca6"/>
<line x1="2156.4" y1="1062.40" x2="2156.4" y2="1065.60" stroke="#9b9ca6" stroke-width="3.1" stroke-linecap="round"/>
<line x1="1727" y1="1133.0" x2="3181" y2="1133.0" stroke="#303237" stroke-width="1.3"/>
<line x1="1727" y1="1188.6" x2="3181" y2="1188.6" stroke="#303237" stroke-width="1.3"/>
<line x1="1727" y1="1244.2" x2="3181" y2="1244.2" stroke="#303237" stroke-width="1.3"/>
<line x1="1727" y1="1299.9" x2="3181" y2="1299.9" stroke="#303237" stroke-width="1.3"/>
<line x1="1727" y1="1355.5" x2="3181" y2="1355.5" stroke="#303237" stroke-width="1.3"/>
<line x1="1727" y1="1411.1" x2="3181" y2="1411.1" stroke="#303237" stroke-width="1.3"/>
<line x1="1772.6" y1="1133.0" x2="1772.6" y2="1418.6" stroke="#303237" stroke-width="1.3"/>
<line x1="1893.8" y1="1133.0" x2="1893.8" y2="1418.6" stroke="#303237" stroke-width="1.3"/>
<line x1="2014.9" y1="1133.0" x2="2014.9" y2="1418.6" stroke="#303237" stroke-width="1.3"/>
<line x1="2136.1" y1="1133.0" x2="2136.1" y2="1418.6" stroke="#303237" stroke-width="1.3"/>
<line x1="2257.2" y1="1133.0" x2="2257.2" y2="1418.6" stroke="#303237" stroke-width="1.3"/>
<line x1="2378.4" y1="1133.0" x2="2378.4" y2="1418.6" stroke="#303237" stroke-width="1.3"/>
<line x1="2499.6" y1="1133.0" x2="2499.6" y2="1418.6" stroke="#303237" stroke-width="1.3"/>
<line x1="2620.7" y1="1133.0" x2="2620.7" y2="1418.6" stroke="#303237" stroke-width="1.3"/>
<line x1="2741.9" y1="1133.0" x2="2741.9" y2="1418.6" stroke="#303237" stroke-width="1.3"/>
<line x1="2863.0" y1="1133.0" x2="2863.0" y2="1418.6" stroke="#303237" stroke-width="1.3"/>
<line x1="2984.2" y1="1133.0" x2="2984.2" y2="1418.6" stroke="#303237" stroke-width="1.3"/>
<line x1="3105.4" y1="1133.0" x2="3105.4" y2="1418.6" stroke="#303237" stroke-width="1.3"/>
<text x="1652.50" y="1139.20" font-size="24" fill="#ccccdc" font-weight="normal" textLength="63.20" lengthAdjust="spacingAndGlyphs">100%</text>
<text x="1663.70" y="1194.82" font-size="24" fill="#ccccdc" font-weight="normal" textLength="52.00" lengthAdjust="spacingAndGlyphs">80%</text>
<text x="1663.70" y="1250.44" font-size="24" fill="#ccccdc" font-weight="normal" textLength="52.00" lengthAdjust="spacingAndGlyphs">60%</text>
<text x="1663.70" y="1306.06" font-size="24" fill="#ccccdc" font-weight="normal" textLength="51.00" lengthAdjust="spacingAndGlyphs">40%</text>
<text x="1663.70" y="1361.68" font-size="24" fill="#ccccdc" font-weight="normal" textLength="52.00" lengthAdjust="spacingAndGlyphs">20%</text>
<text x="1679.50" y="1417.30" font-size="24" fill="#ccccdc" font-weight="normal" textLength="36.20" lengthAdjust="spacingAndGlyphs">0%</text>
<text x="1739.00" y="1447.50" font-size="24" fill="#ccccdc" font-weight="normal" textLength="66.80" lengthAdjust="spacingAndGlyphs">00:00</text>
<text x="1860.24" y="1447.50" font-size="24" fill="#ccccdc" font-weight="normal" textLength="66.80" lengthAdjust="spacingAndGlyphs">00:30</text>
<text x="1980.48" y="1447.50" font-size="24" fill="#ccccdc" font-weight="normal" textLength="67.80" lengthAdjust="spacingAndGlyphs">01:00</text>
<text x="2101.72" y="1447.50" font-size="24" fill="#ccccdc" font-weight="normal" textLength="66.80" lengthAdjust="spacingAndGlyphs">01:30</text>
<text x="2222.96" y="1447.50" font-size="24" fill="#ccccdc" font-weight="normal" textLength="66.80" lengthAdjust="spacingAndGlyphs">02:00</text>
<text x="2344.20" y="1447.50" font-size="24" fill="#ccccdc" font-weight="normal" textLength="66.80" lengthAdjust="spacingAndGlyphs">02:30</text>
<text x="2465.44" y="1447.50" font-size="24" fill="#ccccdc" font-weight="normal" textLength="66.80" lengthAdjust="spacingAndGlyphs">03:00</text>
<text x="2586.68" y="1447.50" font-size="24" fill="#ccccdc" font-weight="normal" textLength="66.80" lengthAdjust="spacingAndGlyphs">03:30</text>
<text x="2707.92" y="1447.50" font-size="24" fill="#ccccdc" font-weight="normal" textLength="66.80" lengthAdjust="spacingAndGlyphs">04:00</text>
<text x="2829.16" y="1447.50" font-size="24" fill="#ccccdc" font-weight="normal" textLength="66.80" lengthAdjust="spacingAndGlyphs">04:30</text>
<text x="2950.40" y="1447.50" font-size="24" fill="#ccccdc" font-weight="normal" textLength="66.80" lengthAdjust="spacingAndGlyphs">05:00</text>
<text x="3071.64" y="1447.50" font-size="24" fill="#ccccdc" font-weight="normal" textLength="66.80" lengthAdjust="spacingAndGlyphs">05:30</text>
<polygon points="2503.00,1243.60 3177.50,1243.60 3177.50,1411.10 2503.00,1411.10" fill="#ECD04A" fill-opacity="0.4"/>
<polygon points="2503.00,1402.50 3177.50,1402.50 3177.50,1411.10 2503.00,1411.10" fill="#abc653" fill-opacity="0.42"/>
<polyline points="2503.00,1402.50 3177.50,1402.50" fill="none" stroke="#a8c65a" stroke-width="2.4" stroke-opacity="1.0" stroke-linejoin="miter" stroke-miterlimit="4"/>
<polyline points="2503.00,1243.60 3177.50,1243.60" fill="none" stroke="#F2D447" stroke-width="2.6" stroke-opacity="1.0" stroke-linejoin="miter" stroke-miterlimit="4"/>
<rect x="1653.0" y="1485.3" width="28" height="8" rx="4" fill="#86BB72"/>
<text x="1695.50" y="1498.50" font-size="25" fill="#ccccdc" font-weight="normal" textLength="254.20" lengthAdjust="spacingAndGlyphs">Disk mounted at /data</text>
<rect x="1972.0" y="1485.3" width="28" height="8" rx="4" fill="#ECD04A"/>
<text x="2013.50" y="1498.50" font-size="25" fill="#ccccdc" font-weight="normal" textLength="205.00" lengthAdjust="spacingAndGlyphs">Disk mounted at /</text>
</svg>
</body></html>
